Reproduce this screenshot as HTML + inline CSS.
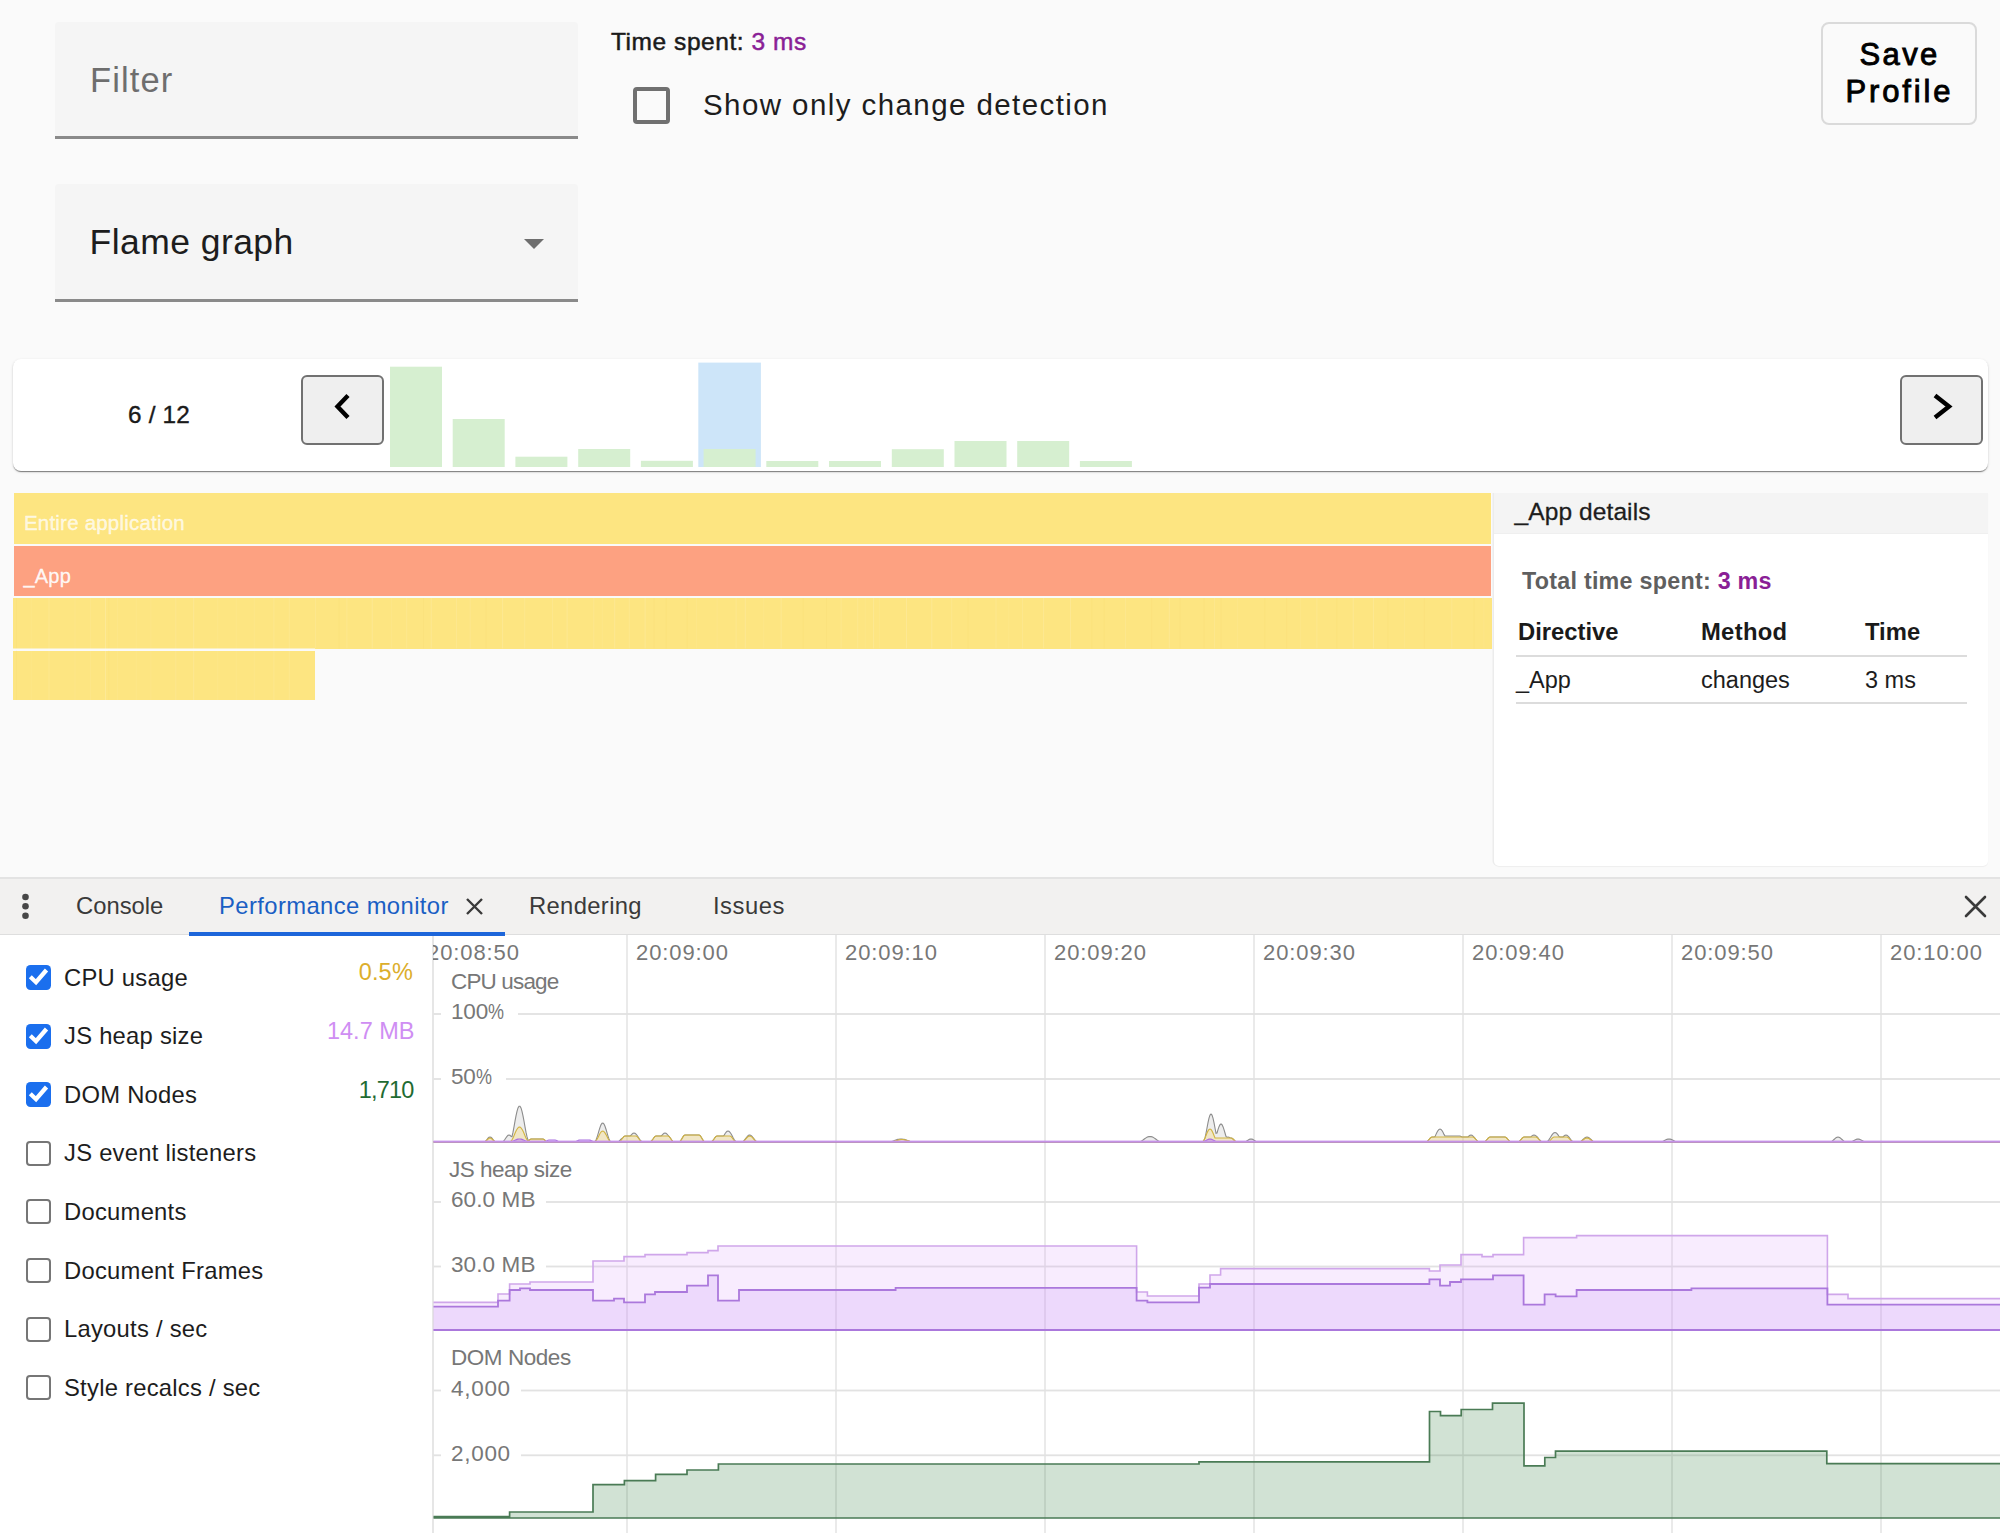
<!DOCTYPE html>
<html><head><meta charset="utf-8"><style>
html,body{margin:0;padding:0}
body{width:2000px;height:1533px;overflow:hidden;background:#fafafa;position:relative;font-family:"Liberation Sans", sans-serif}
.t{position:absolute;white-space:pre;font-family:"Liberation Sans", sans-serif}
.pc{display:inline-block;transform:scaleX(.8);transform-origin:0 0;letter-spacing:0}
</style></head><body>
<div style="position:absolute;left:55px;top:22px;width:523px;height:115px;background:#f5f5f5;border-radius:4px 4px 0 0"></div><div style="position:absolute;left:55px;top:136.4px;width:523px;height:2.3px;background:#8a8a8a"></div><div class="t" style="left:90px;top:63.27px;font-size:34.5px;line-height:34.5px;color:#6e6e6e;font-weight:400;letter-spacing:1.1px;">Filter</div>
<div style="position:absolute;left:55px;top:183.5px;width:523px;height:116px;background:#f5f5f5;border-radius:4px 4px 0 0"></div><div style="position:absolute;left:55px;top:299.4px;width:523px;height:2.3px;background:#8a8a8a"></div><div class="t" style="left:89.5px;top:224.52px;font-size:35.5px;line-height:35.5px;color:#1d1d1d;font-weight:400;letter-spacing:0.45px;">Flame graph</div>
<svg style="position:absolute;left:0;top:0" width="2000" height="400"><path d="M524 239 L544 239 L534 249 Z" fill="#6e6e6e"/></svg><div class="t" style="left:611px;top:29.97px;font-size:24.5px;line-height:24.5px;color:#1a1a1a;font-weight:400;letter-spacing:0.55px;-webkit-text-stroke:0.5px currentColor;">Time spent: <span style="color:#8a1f96">3 ms</span></div>
<div style="position:absolute;left:632.5px;top:86.5px;width:29px;height:29px;border:4px solid #707070;border-radius:4px"></div><div class="t" style="left:703px;top:90.12px;font-size:29.5px;line-height:29.5px;color:#1d1d1d;font-weight:400;letter-spacing:1.42px;">Show only change detection</div>
<div style="position:absolute;left:1821px;top:22px;width:152px;height:99px;border:2px solid #dadada;border-radius:8px;background:#fafafa"></div><div class="t" style="left:1859.5px;top:39.05px;font-size:31px;line-height:31px;color:#000;font-weight:400;letter-spacing:2.4px;-webkit-text-stroke:0.9px #000;">Save</div>
<div class="t" style="left:1845.5px;top:76.35px;font-size:31px;line-height:31px;color:#000;font-weight:400;letter-spacing:2.85px;-webkit-text-stroke:0.9px #000;">Profile</div>
<div style="position:absolute;left:13px;top:358.5px;width:1975px;height:112px;background:#fff;border-radius:8px;box-shadow:0 2px 1px -1px rgba(0,0,0,.3),0 1px 1px 0 rgba(0,0,0,.2),0 1px 3px 0 rgba(0,0,0,.14)"></div><div class="t" style="left:128px;top:403.35px;font-size:24.3px;line-height:24.3px;color:#1a1a1a;font-weight:400;letter-spacing:0.2px;-webkit-text-stroke:0.4px #1a1a1a;">6 / 12</div>
<div style="position:absolute;left:301px;top:375px;width:79px;height:66px;background:#efefef;border:2px solid #717171;border-radius:6px"></div><svg style="position:absolute;left:0;top:0" width="2000" height="500"><polyline points="348,395.5 337.5,406.5 348,417.5" fill="none" stroke="#000" stroke-width="4.4"/></svg><div style="position:absolute;left:1900px;top:375px;width:79px;height:66px;background:#efefef;border:2px solid #717171;border-radius:6px"></div><svg style="position:absolute;left:0;top:0" width="2000" height="500"><polyline points="1935,395.5 1949,406.5 1935,417.5" fill="none" stroke="#000" stroke-width="4.4"/></svg><svg style="position:absolute;left:0;top:0" width="2000" height="500"><rect x="698.3" y="362.6" width="62.6" height="104.4" fill="#cde5f9"/><rect x="390.0" y="366.7" width="52" height="100.3" fill="#d6efd0"/><rect x="452.7" y="419" width="52" height="48.0" fill="#d6efd0"/><rect x="515.4" y="456.7" width="52" height="10.3" fill="#d6efd0"/><rect x="578.2" y="449" width="52" height="18.0" fill="#d6efd0"/><rect x="640.9" y="460.8" width="52" height="6.2" fill="#d6efd0"/><rect x="703.6" y="449" width="52" height="18.0" fill="#d6efd0"/><rect x="766.3" y="461" width="52" height="6.0" fill="#d6efd0"/><rect x="829.0" y="461" width="52" height="6.0" fill="#d6efd0"/><rect x="891.8" y="449.2" width="52" height="17.8" fill="#d6efd0"/><rect x="954.5" y="441" width="52" height="26.0" fill="#d6efd0"/><rect x="1017.2" y="441" width="52" height="26.0" fill="#d6efd0"/><rect x="1079.9" y="461" width="52" height="6.0" fill="#d6efd0"/></svg><div style="position:absolute;left:14px;top:493px;width:1477px;height:50.5px;background:#fde581"></div><div style="position:absolute;left:14px;top:545.5px;width:1477px;height:50.5px;background:#fda181"></div><div style="position:absolute;left:13px;top:598px;width:1479px;height:50.5px;background:#fde581"></div><div style="position:absolute;left:13px;top:650.5px;width:302px;height:49.5px;background:#fde581"></div><svg style="position:absolute;left:0;top:0" width="1500" height="710"><rect x="16.0" y="598" width="1" height="102" fill="rgba(240,205,100,0.12)"/><rect x="30.7" y="598" width="1" height="102" fill="rgba(255,255,255,0.06)"/><rect x="48.5" y="598" width="1" height="102" fill="rgba(255,255,255,0.10)"/><rect x="74.5" y="598" width="1" height="102" fill="rgba(255,255,255,0.06)"/><rect x="90.0" y="598" width="1" height="102" fill="rgba(255,255,255,0.06)"/><rect x="108.2" y="598" width="1" height="102" fill="rgba(240,205,100,0.12)"/><rect x="116.9" y="598" width="1" height="102" fill="rgba(255,255,255,0.06)"/><rect x="135.7" y="598" width="1" height="102" fill="rgba(255,255,255,0.06)"/><rect x="150.4" y="598" width="1" height="102" fill="rgba(255,255,255,0.06)"/><rect x="175.3" y="598" width="1" height="102" fill="rgba(255,255,255,0.10)"/><rect x="193.2" y="598" width="1" height="102" fill="rgba(255,255,255,0.14)"/><rect x="217.2" y="598" width="1" height="102" fill="rgba(255,255,255,0.06)"/><rect x="235.7" y="598" width="1" height="102" fill="rgba(255,255,255,0.06)"/><rect x="253.8" y="598" width="1" height="102" fill="rgba(255,255,255,0.06)"/><rect x="273.4" y="598" width="1" height="102" fill="rgba(255,255,255,0.10)"/><rect x="288.8" y="598" width="1" height="102" fill="rgba(255,255,255,0.10)"/><rect x="315.1" y="598" width="1" height="50.5" fill="rgba(255,255,255,0.10)"/><rect x="338.6" y="598" width="1" height="50.5" fill="rgba(240,205,100,0.12)"/><rect x="346.4" y="598" width="1" height="50.5" fill="rgba(255,255,255,0.10)"/><rect x="371.7" y="598" width="1" height="50.5" fill="rgba(255,255,255,0.14)"/><rect x="391.1" y="598" width="1" height="50.5" fill="rgba(255,255,255,0.06)"/><rect x="406.2" y="598" width="1" height="50.5" fill="rgba(255,255,255,0.10)"/><rect x="423.0" y="598" width="1" height="50.5" fill="rgba(240,205,100,0.12)"/><rect x="430.7" y="598" width="1" height="50.5" fill="rgba(255,255,255,0.14)"/><rect x="456.0" y="598" width="1" height="50.5" fill="rgba(255,255,255,0.10)"/><rect x="469.7" y="598" width="1" height="50.5" fill="rgba(255,255,255,0.10)"/><rect x="485.7" y="598" width="1" height="50.5" fill="rgba(240,205,100,0.12)"/><rect x="502.1" y="598" width="1" height="50.5" fill="rgba(255,255,255,0.14)"/><rect x="524.2" y="598" width="1" height="50.5" fill="rgba(255,255,255,0.10)"/><rect x="552.1" y="598" width="1" height="50.5" fill="rgba(255,255,255,0.10)"/><rect x="566.6" y="598" width="1" height="50.5" fill="rgba(255,255,255,0.14)"/><rect x="593.3" y="598" width="1" height="50.5" fill="rgba(255,255,255,0.10)"/><rect x="601.8" y="598" width="1" height="50.5" fill="rgba(255,255,255,0.06)"/><rect x="614.2" y="598" width="1" height="50.5" fill="rgba(255,255,255,0.14)"/><rect x="628.8" y="598" width="1" height="50.5" fill="rgba(255,255,255,0.10)"/><rect x="644.6" y="598" width="1" height="50.5" fill="rgba(255,255,255,0.14)"/><rect x="653.7" y="598" width="1" height="50.5" fill="rgba(240,205,100,0.12)"/><rect x="665.8" y="598" width="1" height="50.5" fill="rgba(240,205,100,0.12)"/><rect x="686.8" y="598" width="1" height="50.5" fill="rgba(240,205,100,0.12)"/><rect x="696.1" y="598" width="1" height="50.5" fill="rgba(255,255,255,0.06)"/><rect x="716.6" y="598" width="1" height="50.5" fill="rgba(255,255,255,0.06)"/><rect x="735.6" y="598" width="1" height="50.5" fill="rgba(255,255,255,0.10)"/><rect x="744.8" y="598" width="1" height="50.5" fill="rgba(255,255,255,0.14)"/><rect x="763.2" y="598" width="1" height="50.5" fill="rgba(255,255,255,0.06)"/><rect x="780.6" y="598" width="1" height="50.5" fill="rgba(255,255,255,0.14)"/><rect x="802.8" y="598" width="1" height="50.5" fill="rgba(240,205,100,0.12)"/><rect x="826.0" y="598" width="1" height="50.5" fill="rgba(240,205,100,0.12)"/><rect x="840.6" y="598" width="1" height="50.5" fill="rgba(255,255,255,0.10)"/><rect x="857.2" y="598" width="1" height="50.5" fill="rgba(255,255,255,0.10)"/><rect x="864.7" y="598" width="1" height="50.5" fill="rgba(255,255,255,0.06)"/><rect x="873.1" y="598" width="1" height="50.5" fill="rgba(255,255,255,0.14)"/><rect x="879.1" y="598" width="1" height="50.5" fill="rgba(255,255,255,0.06)"/><rect x="906.0" y="598" width="1" height="50.5" fill="rgba(255,255,255,0.14)"/><rect x="931.3" y="598" width="1" height="50.5" fill="rgba(255,255,255,0.14)"/><rect x="951.2" y="598" width="1" height="50.5" fill="rgba(255,255,255,0.10)"/><rect x="967.6" y="598" width="1" height="50.5" fill="rgba(240,205,100,0.12)"/><rect x="995.5" y="598" width="1" height="50.5" fill="rgba(255,255,255,0.10)"/><rect x="1008.3" y="598" width="1" height="50.5" fill="rgba(255,255,255,0.06)"/><rect x="1021.9" y="598" width="1" height="50.5" fill="rgba(255,255,255,0.10)"/><rect x="1043.1" y="598" width="1" height="50.5" fill="rgba(255,255,255,0.14)"/><rect x="1070.0" y="598" width="1" height="50.5" fill="rgba(255,255,255,0.14)"/><rect x="1091.2" y="598" width="1" height="50.5" fill="rgba(240,205,100,0.12)"/><rect x="1103.8" y="598" width="1" height="50.5" fill="rgba(240,205,100,0.12)"/><rect x="1125.1" y="598" width="1" height="50.5" fill="rgba(255,255,255,0.10)"/><rect x="1151.1" y="598" width="1" height="50.5" fill="rgba(240,205,100,0.12)"/><rect x="1168.8" y="598" width="1" height="50.5" fill="rgba(255,255,255,0.14)"/><rect x="1179.7" y="598" width="1" height="50.5" fill="rgba(240,205,100,0.12)"/><rect x="1203.7" y="598" width="1" height="50.5" fill="rgba(240,205,100,0.12)"/><rect x="1214.1" y="598" width="1" height="50.5" fill="rgba(255,255,255,0.10)"/><rect x="1220.7" y="598" width="1" height="50.5" fill="rgba(240,205,100,0.12)"/><rect x="1237.1" y="598" width="1" height="50.5" fill="rgba(255,255,255,0.06)"/><rect x="1264.2" y="598" width="1" height="50.5" fill="rgba(240,205,100,0.12)"/><rect x="1286.1" y="598" width="1" height="50.5" fill="rgba(240,205,100,0.12)"/><rect x="1300.1" y="598" width="1" height="50.5" fill="rgba(255,255,255,0.06)"/><rect x="1316.4" y="598" width="1" height="50.5" fill="rgba(255,255,255,0.10)"/><rect x="1336.2" y="598" width="1" height="50.5" fill="rgba(240,205,100,0.12)"/><rect x="1352.7" y="598" width="1" height="50.5" fill="rgba(255,255,255,0.14)"/><rect x="1372.9" y="598" width="1" height="50.5" fill="rgba(255,255,255,0.14)"/><rect x="1387.4" y="598" width="1" height="50.5" fill="rgba(240,205,100,0.12)"/><rect x="1403.9" y="598" width="1" height="50.5" fill="rgba(255,255,255,0.06)"/><rect x="1423.9" y="598" width="1" height="50.5" fill="rgba(240,205,100,0.12)"/><rect x="1451.3" y="598" width="1" height="50.5" fill="rgba(255,255,255,0.10)"/><rect x="1473.6" y="598" width="1" height="50.5" fill="rgba(240,205,100,0.12)"/><rect x="1483.4" y="598" width="1" height="50.5" fill="rgba(255,255,255,0.06)"/><rect x="105" y="598" width="1" height="102" fill="rgba(255,255,255,0.16)"/><rect x="13" y="648.5" width="302" height="2" fill="#fafafa"/></svg><div class="t" style="left:24px;top:512.58px;font-size:20.5px;line-height:20.5px;color:rgba(255,255,255,.72);font-weight:400;letter-spacing:0.2px;-webkit-text-stroke:0.4px rgba(255,255,255,.72);">Entire application</div>
<div class="t" style="left:23.5px;top:565.50px;font-size:20px;line-height:20px;color:rgba(255,255,255,.92);font-weight:400;letter-spacing:0.2px;-webkit-text-stroke:0.3px rgba(255,255,255,.9);">_App</div>
<div style="position:absolute;left:1494px;top:493px;width:494px;height:373px;background:#fff;border-radius:0 0 5px 5px;box-shadow:-1.5px 0 0 #ececec, 0 1px 1px rgba(0,0,0,.05)"></div><div style="position:absolute;left:1494px;top:492.5px;width:494px;height:40px;background:#f4f4f4;border-bottom:1px solid #efefef"></div><div class="t" style="left:1514.5px;top:499.57px;font-size:24.5px;line-height:24.5px;color:#1d1d1d;font-weight:400;letter-spacing:0.1px;-webkit-text-stroke:0.3px #1d1d1d;">_App details</div>
<div class="t" style="left:1522px;top:569.80px;font-size:23.3px;line-height:23.3px;color:#5f5f5f;font-weight:700;letter-spacing:0.25px;">Total time spent: <span style="color:#8a1f96">3 ms</span></div>
<div class="t" style="left:1518px;top:620.27px;font-size:23.8px;line-height:23.8px;color:#1a1a1a;font-weight:700;letter-spacing:0px;">Directive</div>
<div class="t" style="left:1701px;top:620.27px;font-size:23.8px;line-height:23.8px;color:#1a1a1a;font-weight:700;letter-spacing:0.3px;">Method</div>
<div class="t" style="left:1865px;top:620.27px;font-size:23.8px;line-height:23.8px;color:#1a1a1a;font-weight:700;letter-spacing:0px;">Time</div>
<div style="position:absolute;left:1516px;top:654.6px;width:451px;height:2px;background:#dcdcdc"></div><div class="t" style="left:1516px;top:669.02px;font-size:23.5px;line-height:23.5px;color:#1d1d1d;font-weight:400;letter-spacing:0px;">_App</div>
<div class="t" style="left:1701px;top:669.02px;font-size:23.5px;line-height:23.5px;color:#1d1d1d;font-weight:400;letter-spacing:0px;">changes</div>
<div class="t" style="left:1865px;top:669.02px;font-size:23.5px;line-height:23.5px;color:#1d1d1d;font-weight:400;letter-spacing:0px;">3 ms</div>
<div style="position:absolute;left:1516px;top:702px;width:451px;height:2px;background:#dcdcdc"></div><div style="position:absolute;left:0;top:877px;width:2000px;height:2px;background:#e3e3e3"></div><div style="position:absolute;left:0;top:879px;width:2000px;height:55px;background:#f2f1f0"></div><div style="position:absolute;left:0;top:934px;width:2000px;height:1px;background:#dedede"></div><div style="position:absolute;left:0;top:935px;width:2000px;height:598px;background:#fff"></div><svg style="position:absolute;left:0;top:0" width="2000" height="1533"><circle cx="25.5" cy="897" r="3.3" fill="#474747"/><circle cx="25.5" cy="906.3" r="3.3" fill="#474747"/><circle cx="25.5" cy="915.8" r="3.3" fill="#474747"/><path d="M467 899 L482 914 M482 899 L467 914" stroke="#3a3a3a" stroke-width="2.4"/><path d="M1966 897 L1985 916 M1985 897 L1966 916" stroke="#3a3a3a" stroke-width="2.6" stroke-linecap="round"/></svg><div class="t" style="left:76px;top:894.07px;font-size:23.8px;line-height:23.8px;color:#3a3a3a;font-weight:400;letter-spacing:0px;">Console</div>
<div class="t" style="left:219px;top:894.07px;font-size:23.8px;line-height:23.8px;color:#1a5fc4;font-weight:400;letter-spacing:0.4px;">Performance monitor</div>
<div class="t" style="left:529px;top:894.07px;font-size:23.8px;line-height:23.8px;color:#3a3a3a;font-weight:400;letter-spacing:0.35px;">Rendering</div>
<div class="t" style="left:713px;top:894.07px;font-size:23.8px;line-height:23.8px;color:#3a3a3a;font-weight:400;letter-spacing:0.5px;">Issues</div>
<div style="position:absolute;left:189px;top:932px;width:316px;height:3.5px;background:#1d66da"></div><div style="position:absolute;left:25.5px;top:965.0px;width:25px;height:25px;background:#1b6fee;border-radius:4.5px"></div><svg style="position:absolute;left:25.5px;top:965.0px" width="25" height="25"><polyline points="4.3,11.8 10,17.2 20.5,5" fill="none" stroke="#fff" stroke-width="4.3"/></svg><div class="t" style="left:64px;top:965.52px;font-size:23.8px;line-height:23.8px;color:#1d1d1d;font-weight:400;letter-spacing:0.25px;">CPU usage</div>
<div style="position:absolute;left:25.5px;top:1023.6px;width:25px;height:25px;background:#1b6fee;border-radius:4.5px"></div><svg style="position:absolute;left:25.5px;top:1023.6px" width="25" height="25"><polyline points="4.3,11.8 10,17.2 20.5,5" fill="none" stroke="#fff" stroke-width="4.3"/></svg><div class="t" style="left:64px;top:1024.12px;font-size:23.8px;line-height:23.8px;color:#1d1d1d;font-weight:400;letter-spacing:0.25px;">JS heap size</div>
<div style="position:absolute;left:25.5px;top:1082.2px;width:25px;height:25px;background:#1b6fee;border-radius:4.5px"></div><svg style="position:absolute;left:25.5px;top:1082.2px" width="25" height="25"><polyline points="4.3,11.8 10,17.2 20.5,5" fill="none" stroke="#fff" stroke-width="4.3"/></svg><div class="t" style="left:64px;top:1082.72px;font-size:23.8px;line-height:23.8px;color:#1d1d1d;font-weight:400;letter-spacing:0.25px;">DOM Nodes</div>
<div style="position:absolute;left:25.5px;top:1140.8px;width:21px;height:21px;border:2px solid #767676;border-radius:4px"></div><div class="t" style="left:64px;top:1141.32px;font-size:23.8px;line-height:23.8px;color:#1d1d1d;font-weight:400;letter-spacing:0.25px;">JS event listeners</div>
<div style="position:absolute;left:25.5px;top:1199.4px;width:21px;height:21px;border:2px solid #767676;border-radius:4px"></div><div class="t" style="left:64px;top:1199.92px;font-size:23.8px;line-height:23.8px;color:#1d1d1d;font-weight:400;letter-spacing:0.25px;">Documents</div>
<div style="position:absolute;left:25.5px;top:1258.0px;width:21px;height:21px;border:2px solid #767676;border-radius:4px"></div><div class="t" style="left:64px;top:1258.52px;font-size:23.8px;line-height:23.8px;color:#1d1d1d;font-weight:400;letter-spacing:0.25px;">Document Frames</div>
<div style="position:absolute;left:25.5px;top:1316.6px;width:21px;height:21px;border:2px solid #767676;border-radius:4px"></div><div class="t" style="left:64px;top:1317.12px;font-size:23.8px;line-height:23.8px;color:#1d1d1d;font-weight:400;letter-spacing:0.25px;">Layouts / sec</div>
<div style="position:absolute;left:25.5px;top:1375.2px;width:21px;height:21px;border:2px solid #767676;border-radius:4px"></div><div class="t" style="left:64px;top:1375.72px;font-size:23.8px;line-height:23.8px;color:#1d1d1d;font-weight:400;letter-spacing:0.25px;">Style recalcs / sec</div>
<div class="t" style="right:1587px;text-align:right;top:961.23px;font-size:23.5px;line-height:23.5px;color:#dcae2c;font-weight:400;letter-spacing:0.2px;">0.5%</div>
<div class="t" style="right:1585.5px;text-align:right;top:1019.73px;font-size:23.5px;line-height:23.5px;color:#cf8ef3;font-weight:400;letter-spacing:0px;">14.7 MB</div>
<div class="t" style="right:1586.5px;text-align:right;top:1078.62px;font-size:23.5px;line-height:23.5px;color:#1f6b32;font-weight:400;letter-spacing:-0.8px;">1,710</div>
<div style="position:absolute;left:432px;top:936px;width:1.5px;height:597px;background:#e6e6e6"></div><svg style="position:absolute;left:0;top:0" width="2000" height="1533"><defs><clipPath id="cc"><rect x="433.5" y="935" width="1567" height="598"/></clipPath></defs><g clip-path="url(#cc)"><rect x="626.25" y="935" width="1.5" height="598" fill="#e4e4e4"/><rect x="835.25" y="935" width="1.5" height="598" fill="#e4e4e4"/><rect x="1044.25" y="935" width="1.5" height="598" fill="#e4e4e4"/><rect x="1253.25" y="935" width="1.5" height="598" fill="#e4e4e4"/><rect x="1462.25" y="935" width="1.5" height="598" fill="#e4e4e4"/><rect x="1671.25" y="935" width="1.5" height="598" fill="#e4e4e4"/><rect x="1880.25" y="935" width="1.5" height="598" fill="#e4e4e4"/><rect x="433" y="1013.1" width="1567" height="1.8" fill="#e2e2e2"/><rect x="433" y="1078.1" width="1567" height="1.8" fill="#e2e2e2"/><rect x="433" y="1201.1" width="1567" height="1.8" fill="#e2e2e2"/><rect x="433" y="1265.6" width="1567" height="1.8" fill="#e2e2e2"/><rect x="433" y="1389.6" width="1567" height="1.8" fill="#e2e2e2"/><rect x="433" y="1454.3999999999999" width="1567" height="1.8" fill="#e2e2e2"/><path d="M430 1330 L430 1302.4 L498 1302.4 L498 1294 L509.6 1294 L509.6 1284 L530 1284 L530 1282 L593 1282 L593 1261 L624 1261 L624 1256.6 L645 1256.6 L645 1254.6 L687 1254.6 L687 1252.6 L708 1252.6 L708 1250.6 L718 1250.6 L718 1246 L1136.6 1246 L1136.6 1292 L1147.4 1292 L1147.4 1296 L1199 1296 L1199 1284 L1210 1284 L1210 1275 L1220.6 1275 L1220.6 1268.6 L1429.4 1268.6 L1429.4 1271 L1440 1271 L1440 1265 L1461 1265 L1461 1254.6 L1482 1254.6 L1482 1256.6 L1493 1256.6 L1493 1254.6 L1523.6 1254.6 L1523.6 1237.6 L1576.6 1237.6 L1576.6 1235.6 L1827.4 1235.6 L1827.4 1294.4 L1848 1294.4 L1848 1298.6 L2003 1298.6 L2003 1330 Z" fill="rgba(222,160,248,0.2)" stroke="#cfa6ea" stroke-width="1.6"/><path d="M430 1330 L430 1306.6 L498 1306.6 L498 1300.6 L509.6 1300.6 L509.6 1290 L520 1290 L520 1288.4 L530 1288.4 L530 1290 L593 1290 L593 1300.6 L614 1300.6 L614 1298.6 L624 1298.6 L624 1302.4 L645 1302.4 L645 1294.4 L655 1294.4 L655 1292 L687 1292 L687 1285.6 L708 1285.6 L708 1275.4 L718 1275.4 L718 1300.6 L739 1300.6 L739 1290 L895.6 1290 L895.6 1287.8 L1136.6 1287.8 L1136.6 1300.6 L1147.4 1300.6 L1147.4 1302.4 L1199 1302.4 L1199 1287.6 L1210 1287.6 L1210 1284 L1429.4 1284 L1429.4 1279.4 L1440 1279.4 L1440 1285.6 L1450 1285.6 L1450 1282 L1461 1282 L1461 1279.4 L1493 1279.4 L1493 1275.4 L1523.6 1275.4 L1523.6 1304.6 L1544.6 1304.6 L1544.6 1294.4 L1555.6 1294.4 L1555.6 1296.4 L1576.6 1296.4 L1576.6 1290 L1691.4 1290 L1691.4 1288.4 L1827.4 1288.4 L1827.4 1304.6 L2003 1304.6 L2003 1330 Z" fill="rgba(183,119,240,0.16)" stroke="#ab78dc" stroke-width="1.8"/><path d="M430 1518 L430 1516.6 L509.6 1516.6 L509.6 1512 L593 1512 L593 1484.6 L624.4 1484.6 L624.4 1480.6 L655.6 1480.6 L655.6 1474.4 L687 1474.4 L687 1470 L718.4 1470 L718.4 1464 L1199 1464 L1199 1461.8 L1429.5 1461.8 L1429.5 1411.5 L1440.5 1411.5 L1440.5 1415.7 L1461.2 1415.7 L1461.2 1409.5 L1492.5 1409.5 L1492.5 1403.2 L1524 1403.2 L1524 1465.8 L1544.8 1465.8 L1544.8 1457.5 L1555.5 1457.5 L1555.5 1451.2 L1826.8 1451.2 L1826.8 1463.7 L2003 1463.7 L2003 1518 Z" fill="rgba(44,124,57,0.22)" stroke="#4a7b55" stroke-width="1.7"/><path d="M432 1142 L433.0 1142.00 L434.0 1142.00 L435.0 1142.00 L436.0 1142.00 L437.0 1142.00 L438.0 1142.00 L439.0 1142.00 L440.0 1142.00 L441.0 1142.00 L442.0 1142.00 L443.0 1142.00 L444.0 1142.00 L445.0 1142.00 L446.0 1142.00 L447.0 1142.00 L448.0 1142.00 L449.0 1142.00 L450.0 1142.00 L451.0 1142.00 L452.0 1142.00 L453.0 1142.00 L454.0 1142.00 L455.0 1142.00 L456.0 1142.00 L457.0 1142.00 L458.0 1142.00 L459.0 1142.00 L460.0 1142.00 L461.0 1142.00 L462.0 1142.00 L463.0 1142.00 L464.0 1142.00 L465.0 1142.00 L466.0 1142.00 L467.0 1142.00 L468.0 1142.00 L469.0 1142.00 L470.0 1142.00 L471.0 1142.00 L472.0 1142.00 L473.0 1142.00 L474.0 1142.00 L475.0 1142.00 L476.0 1142.00 L477.0 1142.00 L478.0 1142.00 L479.0 1142.00 L480.0 1142.00 L481.0 1142.00 L482.0 1142.00 L483.0 1142.00 L484.0 1142.00 L485.0 1141.67 L486.0 1140.75 L487.0 1139.50 L488.0 1138.25 L489.0 1137.33 L490.0 1137.00 L491.0 1137.33 L492.0 1138.25 L493.0 1139.50 L494.0 1140.75 L495.0 1141.67 L496.0 1142.00 L497.0 1142.00 L498.0 1142.00 L499.0 1142.00 L500.0 1142.00 L501.0 1142.00 L502.0 1142.00 L503.0 1141.65 L504.0 1140.68 L505.0 1139.28 L506.0 1137.72 L507.0 1136.32 L508.0 1135.35 L509.0 1135.00 L510.0 1135.35 L511.0 1136.32 L512.0 1136.73 L513.0 1132.17 L514.0 1126.82 L515.0 1121.18 L516.0 1115.83 L517.0 1111.27 L518.0 1107.96 L519.0 1106.22 L520.0 1106.22 L521.0 1107.96 L522.0 1111.27 L523.0 1115.83 L524.0 1121.18 L525.0 1126.82 L526.0 1132.17 L527.0 1136.73 L528.0 1140.04 L529.0 1140.50 L530.0 1139.47 L531.0 1139.00 L532.0 1139.00 L533.0 1139.00 L534.0 1139.00 L535.0 1139.00 L536.0 1139.00 L537.0 1139.00 L538.0 1139.00 L539.0 1139.00 L540.0 1139.00 L541.0 1139.00 L542.0 1139.00 L543.0 1139.00 L544.0 1139.47 L545.0 1140.50 L546.0 1141.53 L547.0 1142.00 L548.0 1142.00 L549.0 1142.00 L550.0 1142.00 L551.0 1142.00 L552.0 1142.00 L553.0 1142.00 L554.0 1142.00 L555.0 1142.00 L556.0 1142.00 L557.0 1142.00 L558.0 1142.00 L559.0 1142.00 L560.0 1142.00 L561.0 1142.00 L562.0 1142.00 L563.0 1142.00 L564.0 1142.00 L565.0 1142.00 L566.0 1142.00 L567.0 1142.00 L568.0 1142.00 L569.0 1142.00 L570.0 1142.00 L571.0 1142.00 L572.0 1142.00 L573.0 1142.00 L574.0 1142.00 L575.0 1142.00 L576.0 1142.00 L577.0 1142.00 L578.0 1142.00 L579.0 1142.00 L580.0 1142.00 L581.0 1142.00 L582.0 1142.00 L583.0 1142.00 L584.0 1142.00 L585.0 1142.00 L586.0 1142.00 L587.0 1142.00 L588.0 1142.00 L589.0 1142.00 L590.0 1142.00 L591.0 1142.00 L592.0 1142.00 L593.0 1142.00 L594.0 1142.00 L595.0 1141.59 L596.0 1139.97 L597.0 1137.35 L598.0 1134.07 L599.0 1130.58 L600.0 1127.35 L601.0 1124.81 L602.0 1123.32 L603.0 1123.06 L604.0 1124.08 L605.0 1126.23 L606.0 1129.23 L607.0 1132.68 L608.0 1136.09 L609.0 1139.03 L610.0 1141.08 L611.0 1141.97 L612.0 1142.00 L613.0 1142.00 L614.0 1142.00 L615.0 1142.00 L616.0 1142.00 L617.0 1142.00 L618.0 1141.78 L619.0 1141.15 L620.0 1140.25 L621.0 1139.25 L622.0 1138.35 L623.0 1137.56 L624.0 1136.44 L625.0 1136.00 L626.0 1136.00 L627.0 1136.00 L628.0 1136.00 L629.0 1136.00 L630.0 1136.00 L631.0 1135.25 L632.0 1134.05 L633.0 1133.27 L634.0 1133.00 L635.0 1133.27 L636.0 1134.05 L637.0 1135.25 L638.0 1136.72 L639.0 1138.28 L640.0 1139.75 L641.0 1140.95 L642.0 1141.73 L643.0 1142.00 L644.0 1142.00 L645.0 1142.00 L646.0 1142.00 L647.0 1142.00 L648.0 1142.00 L649.0 1142.00 L650.0 1141.78 L651.0 1141.15 L652.0 1140.25 L653.0 1139.00 L654.0 1137.56 L655.0 1136.44 L656.0 1136.00 L657.0 1136.00 L658.0 1136.00 L659.0 1136.00 L660.0 1136.00 L661.0 1136.00 L662.0 1135.25 L663.0 1134.05 L664.0 1133.27 L665.0 1133.00 L666.0 1133.27 L667.0 1134.05 L668.0 1135.25 L669.0 1136.44 L670.0 1137.56 L671.0 1139.00 L672.0 1140.44 L673.0 1141.56 L674.0 1142.00 L675.0 1142.00 L676.0 1142.00 L677.0 1142.00 L678.0 1142.00 L679.0 1142.00 L680.0 1141.48 L681.0 1140.19 L682.0 1138.50 L683.0 1136.81 L684.0 1135.52 L685.0 1135.00 L686.0 1135.00 L687.0 1135.00 L688.0 1135.00 L689.0 1135.00 L690.0 1135.00 L691.0 1135.00 L692.0 1135.00 L693.0 1135.00 L694.0 1135.00 L695.0 1135.00 L696.0 1135.00 L697.0 1135.00 L698.0 1135.00 L699.0 1135.00 L700.0 1135.52 L701.0 1136.81 L702.0 1138.50 L703.0 1140.19 L704.0 1141.48 L705.0 1142.00 L706.0 1142.00 L707.0 1142.00 L708.0 1142.00 L709.0 1142.00 L710.0 1142.00 L711.0 1141.79 L712.0 1141.19 L713.0 1140.30 L714.0 1139.00 L715.0 1137.56 L716.0 1136.44 L717.0 1136.00 L718.0 1136.00 L719.0 1136.00 L720.0 1136.00 L721.0 1136.00 L722.0 1136.00 L723.0 1136.00 L724.0 1135.54 L725.0 1133.75 L726.0 1132.29 L727.0 1131.33 L728.0 1131.00 L729.0 1131.33 L730.0 1132.29 L731.0 1133.75 L732.0 1135.54 L733.0 1137.46 L734.0 1139.25 L735.0 1140.71 L736.0 1141.67 L737.0 1142.00 L738.0 1142.00 L739.0 1142.00 L740.0 1142.00 L741.0 1142.00 L742.0 1141.98 L743.0 1141.55 L744.0 1140.67 L745.0 1139.45 L746.0 1138.09 L747.0 1136.79 L748.0 1135.75 L749.0 1135.13 L750.0 1135.02 L751.0 1135.45 L752.0 1136.33 L753.0 1137.55 L754.0 1138.91 L755.0 1140.21 L756.0 1141.25 L757.0 1141.87 L758.0 1142.00 L759.0 1142.00 L760.0 1142.00 L761.0 1142.00 L762.0 1142.00 L763.0 1142.00 L764.0 1142.00 L765.0 1142.00 L766.0 1142.00 L767.0 1142.00 L768.0 1142.00 L769.0 1142.00 L770.0 1142.00 L771.0 1142.00 L772.0 1142.00 L773.0 1142.00 L774.0 1142.00 L775.0 1142.00 L776.0 1142.00 L777.0 1142.00 L778.0 1142.00 L779.0 1142.00 L780.0 1142.00 L781.0 1142.00 L782.0 1142.00 L783.0 1142.00 L784.0 1142.00 L785.0 1142.00 L786.0 1142.00 L787.0 1142.00 L788.0 1142.00 L789.0 1142.00 L790.0 1142.00 L791.0 1142.00 L792.0 1142.00 L793.0 1142.00 L794.0 1142.00 L795.0 1142.00 L796.0 1142.00 L797.0 1142.00 L798.0 1142.00 L799.0 1142.00 L800.0 1142.00 L801.0 1142.00 L802.0 1142.00 L803.0 1142.00 L804.0 1142.00 L805.0 1142.00 L806.0 1142.00 L807.0 1142.00 L808.0 1142.00 L809.0 1142.00 L810.0 1142.00 L811.0 1142.00 L812.0 1142.00 L813.0 1142.00 L814.0 1142.00 L815.0 1142.00 L816.0 1142.00 L817.0 1142.00 L818.0 1142.00 L819.0 1142.00 L820.0 1142.00 L821.0 1142.00 L822.0 1142.00 L823.0 1142.00 L824.0 1142.00 L825.0 1142.00 L826.0 1142.00 L827.0 1142.00 L828.0 1142.00 L829.0 1142.00 L830.0 1142.00 L831.0 1142.00 L832.0 1142.00 L833.0 1142.00 L834.0 1142.00 L835.0 1142.00 L836.0 1142.00 L837.0 1142.00 L838.0 1142.00 L839.0 1142.00 L840.0 1142.00 L841.0 1142.00 L842.0 1142.00 L843.0 1142.00 L844.0 1142.00 L845.0 1142.00 L846.0 1142.00 L847.0 1142.00 L848.0 1142.00 L849.0 1142.00 L850.0 1142.00 L851.0 1142.00 L852.0 1142.00 L853.0 1142.00 L854.0 1142.00 L855.0 1142.00 L856.0 1142.00 L857.0 1142.00 L858.0 1142.00 L859.0 1142.00 L860.0 1142.00 L861.0 1142.00 L862.0 1142.00 L863.0 1142.00 L864.0 1142.00 L865.0 1142.00 L866.0 1142.00 L867.0 1142.00 L868.0 1142.00 L869.0 1142.00 L870.0 1142.00 L871.0 1142.00 L872.0 1142.00 L873.0 1142.00 L874.0 1142.00 L875.0 1142.00 L876.0 1142.00 L877.0 1142.00 L878.0 1142.00 L879.0 1142.00 L880.0 1142.00 L881.0 1142.00 L882.0 1142.00 L883.0 1142.00 L884.0 1142.00 L885.0 1142.00 L886.0 1142.00 L887.0 1142.00 L888.0 1142.00 L889.0 1141.96 L890.0 1141.83 L891.0 1141.62 L892.0 1141.35 L893.0 1141.03 L894.0 1140.68 L895.0 1140.32 L896.0 1139.97 L897.0 1139.65 L898.0 1139.38 L899.0 1139.17 L900.0 1139.04 L901.0 1139.00 L902.0 1139.04 L903.0 1139.17 L904.0 1139.38 L905.0 1139.65 L906.0 1139.97 L907.0 1140.32 L908.0 1140.68 L909.0 1141.03 L910.0 1141.35 L911.0 1141.62 L912.0 1141.83 L913.0 1141.96 L914.0 1142.00 L915.0 1142.00 L916.0 1142.00 L917.0 1142.00 L918.0 1142.00 L919.0 1142.00 L920.0 1142.00 L921.0 1142.00 L922.0 1142.00 L923.0 1142.00 L924.0 1142.00 L925.0 1142.00 L926.0 1142.00 L927.0 1142.00 L928.0 1142.00 L929.0 1142.00 L930.0 1142.00 L931.0 1142.00 L932.0 1142.00 L933.0 1142.00 L934.0 1142.00 L935.0 1142.00 L936.0 1142.00 L937.0 1142.00 L938.0 1142.00 L939.0 1142.00 L940.0 1142.00 L941.0 1142.00 L942.0 1142.00 L943.0 1142.00 L944.0 1142.00 L945.0 1142.00 L946.0 1142.00 L947.0 1142.00 L948.0 1142.00 L949.0 1142.00 L950.0 1142.00 L951.0 1142.00 L952.0 1142.00 L953.0 1142.00 L954.0 1142.00 L955.0 1142.00 L956.0 1142.00 L957.0 1142.00 L958.0 1142.00 L959.0 1142.00 L960.0 1142.00 L961.0 1142.00 L962.0 1142.00 L963.0 1142.00 L964.0 1142.00 L965.0 1142.00 L966.0 1142.00 L967.0 1142.00 L968.0 1142.00 L969.0 1142.00 L970.0 1142.00 L971.0 1142.00 L972.0 1142.00 L973.0 1142.00 L974.0 1142.00 L975.0 1142.00 L976.0 1142.00 L977.0 1142.00 L978.0 1142.00 L979.0 1142.00 L980.0 1142.00 L981.0 1142.00 L982.0 1142.00 L983.0 1142.00 L984.0 1142.00 L985.0 1142.00 L986.0 1142.00 L987.0 1142.00 L988.0 1142.00 L989.0 1142.00 L990.0 1142.00 L991.0 1142.00 L992.0 1142.00 L993.0 1142.00 L994.0 1142.00 L995.0 1142.00 L996.0 1142.00 L997.0 1142.00 L998.0 1142.00 L999.0 1142.00 L1000.0 1142.00 L1001.0 1142.00 L1002.0 1142.00 L1003.0 1142.00 L1004.0 1142.00 L1005.0 1142.00 L1006.0 1142.00 L1007.0 1142.00 L1008.0 1142.00 L1009.0 1142.00 L1010.0 1142.00 L1011.0 1142.00 L1012.0 1142.00 L1013.0 1142.00 L1014.0 1142.00 L1015.0 1142.00 L1016.0 1142.00 L1017.0 1142.00 L1018.0 1142.00 L1019.0 1142.00 L1020.0 1142.00 L1021.0 1142.00 L1022.0 1142.00 L1023.0 1142.00 L1024.0 1142.00 L1025.0 1142.00 L1026.0 1142.00 L1027.0 1142.00 L1028.0 1142.00 L1029.0 1142.00 L1030.0 1142.00 L1031.0 1142.00 L1032.0 1142.00 L1033.0 1142.00 L1034.0 1142.00 L1035.0 1142.00 L1036.0 1142.00 L1037.0 1142.00 L1038.0 1142.00 L1039.0 1142.00 L1040.0 1142.00 L1041.0 1142.00 L1042.0 1142.00 L1043.0 1142.00 L1044.0 1142.00 L1045.0 1142.00 L1046.0 1142.00 L1047.0 1142.00 L1048.0 1142.00 L1049.0 1142.00 L1050.0 1142.00 L1051.0 1142.00 L1052.0 1142.00 L1053.0 1142.00 L1054.0 1142.00 L1055.0 1142.00 L1056.0 1142.00 L1057.0 1142.00 L1058.0 1142.00 L1059.0 1142.00 L1060.0 1142.00 L1061.0 1142.00 L1062.0 1142.00 L1063.0 1142.00 L1064.0 1142.00 L1065.0 1142.00 L1066.0 1142.00 L1067.0 1142.00 L1068.0 1142.00 L1069.0 1142.00 L1070.0 1142.00 L1071.0 1142.00 L1072.0 1142.00 L1073.0 1142.00 L1074.0 1142.00 L1075.0 1142.00 L1076.0 1142.00 L1077.0 1142.00 L1078.0 1142.00 L1079.0 1142.00 L1080.0 1142.00 L1081.0 1142.00 L1082.0 1142.00 L1083.0 1142.00 L1084.0 1142.00 L1085.0 1142.00 L1086.0 1142.00 L1087.0 1142.00 L1088.0 1142.00 L1089.0 1142.00 L1090.0 1142.00 L1091.0 1142.00 L1092.0 1142.00 L1093.0 1142.00 L1094.0 1142.00 L1095.0 1142.00 L1096.0 1142.00 L1097.0 1142.00 L1098.0 1142.00 L1099.0 1142.00 L1100.0 1142.00 L1101.0 1142.00 L1102.0 1142.00 L1103.0 1142.00 L1104.0 1142.00 L1105.0 1142.00 L1106.0 1142.00 L1107.0 1142.00 L1108.0 1142.00 L1109.0 1142.00 L1110.0 1142.00 L1111.0 1142.00 L1112.0 1142.00 L1113.0 1142.00 L1114.0 1142.00 L1115.0 1142.00 L1116.0 1142.00 L1117.0 1142.00 L1118.0 1142.00 L1119.0 1142.00 L1120.0 1142.00 L1121.0 1142.00 L1122.0 1142.00 L1123.0 1142.00 L1124.0 1142.00 L1125.0 1142.00 L1126.0 1142.00 L1127.0 1142.00 L1128.0 1142.00 L1129.0 1142.00 L1130.0 1142.00 L1131.0 1142.00 L1132.0 1142.00 L1133.0 1142.00 L1134.0 1142.00 L1135.0 1142.00 L1136.0 1142.00 L1137.0 1142.00 L1138.0 1142.00 L1139.0 1141.91 L1140.0 1141.63 L1141.0 1141.19 L1142.0 1140.62 L1143.0 1139.96 L1144.0 1139.25 L1145.0 1138.54 L1146.0 1137.88 L1147.0 1137.31 L1148.0 1136.87 L1149.0 1136.59 L1150.0 1136.50 L1151.0 1136.59 L1152.0 1136.87 L1153.0 1137.31 L1154.0 1137.88 L1155.0 1138.54 L1156.0 1139.25 L1157.0 1139.96 L1158.0 1140.62 L1159.0 1141.19 L1160.0 1141.63 L1161.0 1141.91 L1162.0 1142.00 L1163.0 1142.00 L1164.0 1142.00 L1165.0 1142.00 L1166.0 1142.00 L1167.0 1142.00 L1168.0 1142.00 L1169.0 1142.00 L1170.0 1142.00 L1171.0 1142.00 L1172.0 1142.00 L1173.0 1142.00 L1174.0 1142.00 L1175.0 1142.00 L1176.0 1142.00 L1177.0 1142.00 L1178.0 1142.00 L1179.0 1142.00 L1180.0 1142.00 L1181.0 1142.00 L1182.0 1142.00 L1183.0 1142.00 L1184.0 1142.00 L1185.0 1142.00 L1186.0 1142.00 L1187.0 1142.00 L1188.0 1142.00 L1189.0 1142.00 L1190.0 1142.00 L1191.0 1142.00 L1192.0 1142.00 L1193.0 1142.00 L1194.0 1142.00 L1195.0 1142.00 L1196.0 1142.00 L1197.0 1142.00 L1198.0 1142.00 L1199.0 1142.00 L1200.0 1142.00 L1201.0 1142.00 L1202.0 1142.00 L1203.0 1141.51 L1204.0 1140.10 L1205.0 1137.90 L1206.0 1133.36 L1207.0 1128.00 L1208.0 1122.64 L1209.0 1118.10 L1210.0 1115.07 L1211.0 1114.00 L1212.0 1115.07 L1213.0 1118.10 L1214.0 1122.64 L1215.0 1128.00 L1216.0 1133.36 L1217.0 1133.00 L1218.0 1129.56 L1219.0 1126.64 L1220.0 1124.69 L1221.0 1124.00 L1222.0 1124.69 L1223.0 1126.64 L1224.0 1129.56 L1225.0 1133.00 L1226.0 1136.44 L1227.0 1137.19 L1228.0 1137.00 L1229.0 1137.19 L1230.0 1137.73 L1231.0 1138.00 L1232.0 1138.30 L1233.0 1139.04 L1234.0 1140.00 L1235.0 1140.96 L1236.0 1141.70 L1237.0 1142.00 L1238.0 1142.00 L1239.0 1142.00 L1240.0 1142.00 L1241.0 1142.00 L1242.0 1142.00 L1243.0 1142.00 L1244.0 1142.00 L1245.0 1141.85 L1246.0 1141.44 L1247.0 1140.83 L1248.0 1140.17 L1249.0 1139.56 L1250.0 1139.15 L1251.0 1139.00 L1252.0 1139.15 L1253.0 1139.56 L1254.0 1140.17 L1255.0 1140.83 L1256.0 1141.44 L1257.0 1141.85 L1258.0 1142.00 L1259.0 1142.00 L1260.0 1142.00 L1261.0 1142.00 L1262.0 1142.00 L1263.0 1142.00 L1264.0 1142.00 L1265.0 1142.00 L1266.0 1142.00 L1267.0 1142.00 L1268.0 1142.00 L1269.0 1142.00 L1270.0 1142.00 L1271.0 1142.00 L1272.0 1142.00 L1273.0 1142.00 L1274.0 1142.00 L1275.0 1142.00 L1276.0 1142.00 L1277.0 1142.00 L1278.0 1142.00 L1279.0 1142.00 L1280.0 1142.00 L1281.0 1142.00 L1282.0 1142.00 L1283.0 1142.00 L1284.0 1142.00 L1285.0 1142.00 L1286.0 1142.00 L1287.0 1142.00 L1288.0 1142.00 L1289.0 1142.00 L1290.0 1142.00 L1291.0 1142.00 L1292.0 1142.00 L1293.0 1142.00 L1294.0 1142.00 L1295.0 1142.00 L1296.0 1142.00 L1297.0 1142.00 L1298.0 1142.00 L1299.0 1142.00 L1300.0 1142.00 L1301.0 1142.00 L1302.0 1142.00 L1303.0 1142.00 L1304.0 1142.00 L1305.0 1142.00 L1306.0 1142.00 L1307.0 1142.00 L1308.0 1142.00 L1309.0 1142.00 L1310.0 1142.00 L1311.0 1142.00 L1312.0 1142.00 L1313.0 1142.00 L1314.0 1142.00 L1315.0 1142.00 L1316.0 1142.00 L1317.0 1142.00 L1318.0 1142.00 L1319.0 1142.00 L1320.0 1142.00 L1321.0 1142.00 L1322.0 1142.00 L1323.0 1142.00 L1324.0 1142.00 L1325.0 1142.00 L1326.0 1142.00 L1327.0 1142.00 L1328.0 1142.00 L1329.0 1142.00 L1330.0 1142.00 L1331.0 1142.00 L1332.0 1142.00 L1333.0 1142.00 L1334.0 1142.00 L1335.0 1142.00 L1336.0 1142.00 L1337.0 1142.00 L1338.0 1142.00 L1339.0 1142.00 L1340.0 1142.00 L1341.0 1142.00 L1342.0 1142.00 L1343.0 1142.00 L1344.0 1142.00 L1345.0 1142.00 L1346.0 1142.00 L1347.0 1142.00 L1348.0 1142.00 L1349.0 1142.00 L1350.0 1142.00 L1351.0 1142.00 L1352.0 1142.00 L1353.0 1142.00 L1354.0 1142.00 L1355.0 1142.00 L1356.0 1142.00 L1357.0 1142.00 L1358.0 1142.00 L1359.0 1142.00 L1360.0 1142.00 L1361.0 1142.00 L1362.0 1142.00 L1363.0 1142.00 L1364.0 1142.00 L1365.0 1142.00 L1366.0 1142.00 L1367.0 1142.00 L1368.0 1142.00 L1369.0 1142.00 L1370.0 1142.00 L1371.0 1142.00 L1372.0 1142.00 L1373.0 1142.00 L1374.0 1142.00 L1375.0 1142.00 L1376.0 1142.00 L1377.0 1142.00 L1378.0 1142.00 L1379.0 1142.00 L1380.0 1142.00 L1381.0 1142.00 L1382.0 1142.00 L1383.0 1142.00 L1384.0 1142.00 L1385.0 1142.00 L1386.0 1142.00 L1387.0 1142.00 L1388.0 1142.00 L1389.0 1142.00 L1390.0 1142.00 L1391.0 1142.00 L1392.0 1142.00 L1393.0 1142.00 L1394.0 1142.00 L1395.0 1142.00 L1396.0 1142.00 L1397.0 1142.00 L1398.0 1142.00 L1399.0 1142.00 L1400.0 1142.00 L1401.0 1142.00 L1402.0 1142.00 L1403.0 1142.00 L1404.0 1142.00 L1405.0 1142.00 L1406.0 1142.00 L1407.0 1142.00 L1408.0 1142.00 L1409.0 1142.00 L1410.0 1142.00 L1411.0 1142.00 L1412.0 1142.00 L1413.0 1142.00 L1414.0 1142.00 L1415.0 1142.00 L1416.0 1142.00 L1417.0 1142.00 L1418.0 1142.00 L1419.0 1142.00 L1420.0 1142.00 L1421.0 1142.00 L1422.0 1142.00 L1423.0 1142.00 L1424.0 1142.00 L1425.0 1142.00 L1426.0 1142.00 L1427.0 1141.63 L1428.0 1140.70 L1429.0 1139.50 L1430.0 1138.30 L1431.0 1137.37 L1432.0 1137.00 L1433.0 1137.00 L1434.0 1137.00 L1435.0 1136.63 L1436.0 1134.37 L1437.0 1132.25 L1438.0 1130.52 L1439.0 1129.39 L1440.0 1129.00 L1441.0 1129.39 L1442.0 1130.52 L1443.0 1132.25 L1444.0 1134.37 L1445.0 1136.00 L1446.0 1136.00 L1447.0 1136.00 L1448.0 1136.00 L1449.0 1136.00 L1450.0 1136.00 L1451.0 1136.00 L1452.0 1136.00 L1453.0 1136.00 L1454.0 1136.00 L1455.0 1136.00 L1456.0 1136.00 L1457.0 1136.00 L1458.0 1136.00 L1459.0 1136.00 L1460.0 1136.00 L1461.0 1136.44 L1462.0 1137.00 L1463.0 1137.00 L1464.0 1137.00 L1465.0 1137.00 L1466.0 1137.00 L1467.0 1137.00 L1468.0 1137.00 L1469.0 1136.03 L1470.0 1135.27 L1471.0 1135.00 L1472.0 1135.27 L1473.0 1136.03 L1474.0 1137.16 L1475.0 1138.30 L1476.0 1139.50 L1477.0 1140.70 L1478.0 1141.63 L1479.0 1142.00 L1480.0 1142.00 L1481.0 1142.00 L1482.0 1142.00 L1483.0 1142.00 L1484.0 1142.00 L1485.0 1141.63 L1486.0 1140.70 L1487.0 1139.50 L1488.0 1138.30 L1489.0 1137.37 L1490.0 1137.00 L1491.0 1137.00 L1492.0 1137.00 L1493.0 1137.00 L1494.0 1137.00 L1495.0 1137.00 L1496.0 1137.00 L1497.0 1137.00 L1498.0 1137.00 L1499.0 1137.00 L1500.0 1137.00 L1501.0 1137.00 L1502.0 1137.00 L1503.0 1137.00 L1504.0 1137.00 L1505.0 1137.00 L1506.0 1137.37 L1507.0 1138.30 L1508.0 1139.50 L1509.0 1140.70 L1510.0 1141.63 L1511.0 1142.00 L1512.0 1142.00 L1513.0 1142.00 L1514.0 1142.00 L1515.0 1142.00 L1516.0 1142.00 L1517.0 1142.00 L1518.0 1142.00 L1519.0 1141.63 L1520.0 1140.70 L1521.0 1139.50 L1522.0 1138.30 L1523.0 1137.37 L1524.0 1137.00 L1525.0 1137.00 L1526.0 1137.00 L1527.0 1137.00 L1528.0 1137.00 L1529.0 1137.00 L1530.0 1137.00 L1531.0 1136.75 L1532.0 1135.82 L1533.0 1135.21 L1534.0 1135.00 L1535.0 1135.21 L1536.0 1135.82 L1537.0 1136.75 L1538.0 1137.89 L1539.0 1139.11 L1540.0 1140.25 L1541.0 1141.18 L1542.0 1141.79 L1543.0 1142.00 L1544.0 1142.00 L1545.0 1142.00 L1546.0 1142.00 L1547.0 1141.71 L1548.0 1140.89 L1549.0 1139.62 L1550.0 1138.07 L1551.0 1136.43 L1552.0 1134.88 L1553.0 1133.61 L1554.0 1132.79 L1555.0 1132.50 L1556.0 1132.79 L1557.0 1133.61 L1558.0 1134.88 L1559.0 1136.43 L1560.0 1137.00 L1561.0 1137.00 L1562.0 1137.00 L1563.0 1137.00 L1564.0 1136.03 L1565.0 1135.27 L1566.0 1135.00 L1567.0 1135.27 L1568.0 1136.03 L1569.0 1137.16 L1570.0 1138.50 L1571.0 1139.84 L1572.0 1140.97 L1573.0 1141.73 L1574.0 1142.00 L1575.0 1142.00 L1576.0 1142.00 L1577.0 1142.00 L1578.0 1142.00 L1579.0 1142.00 L1580.0 1141.81 L1581.0 1141.27 L1582.0 1140.46 L1583.0 1139.50 L1584.0 1138.54 L1585.0 1137.73 L1586.0 1137.19 L1587.0 1137.00 L1588.0 1137.19 L1589.0 1137.73 L1590.0 1138.54 L1591.0 1139.50 L1592.0 1140.46 L1593.0 1141.27 L1594.0 1141.81 L1595.0 1142.00 L1596.0 1142.00 L1597.0 1142.00 L1598.0 1142.00 L1599.0 1142.00 L1600.0 1142.00 L1601.0 1142.00 L1602.0 1142.00 L1603.0 1142.00 L1604.0 1142.00 L1605.0 1142.00 L1606.0 1142.00 L1607.0 1142.00 L1608.0 1142.00 L1609.0 1142.00 L1610.0 1142.00 L1611.0 1142.00 L1612.0 1142.00 L1613.0 1142.00 L1614.0 1142.00 L1615.0 1142.00 L1616.0 1142.00 L1617.0 1142.00 L1618.0 1142.00 L1619.0 1142.00 L1620.0 1142.00 L1621.0 1142.00 L1622.0 1142.00 L1623.0 1142.00 L1624.0 1142.00 L1625.0 1142.00 L1626.0 1142.00 L1627.0 1142.00 L1628.0 1142.00 L1629.0 1142.00 L1630.0 1142.00 L1631.0 1142.00 L1632.0 1142.00 L1633.0 1142.00 L1634.0 1142.00 L1635.0 1142.00 L1636.0 1142.00 L1637.0 1142.00 L1638.0 1142.00 L1639.0 1142.00 L1640.0 1142.00 L1641.0 1142.00 L1642.0 1142.00 L1643.0 1142.00 L1644.0 1142.00 L1645.0 1142.00 L1646.0 1142.00 L1647.0 1142.00 L1648.0 1142.00 L1649.0 1142.00 L1650.0 1142.00 L1651.0 1142.00 L1652.0 1142.00 L1653.0 1142.00 L1654.0 1142.00 L1655.0 1142.00 L1656.0 1142.00 L1657.0 1142.00 L1658.0 1142.00 L1659.0 1142.00 L1660.0 1142.00 L1661.0 1141.91 L1662.0 1141.65 L1663.0 1141.25 L1664.0 1140.76 L1665.0 1140.24 L1666.0 1139.75 L1667.0 1139.35 L1668.0 1139.09 L1669.0 1139.00 L1670.0 1139.09 L1671.0 1139.35 L1672.0 1139.75 L1673.0 1140.24 L1674.0 1140.76 L1675.0 1141.25 L1676.0 1141.65 L1677.0 1141.91 L1678.0 1142.00 L1679.0 1142.00 L1680.0 1142.00 L1681.0 1142.00 L1682.0 1142.00 L1683.0 1142.00 L1684.0 1142.00 L1685.0 1142.00 L1686.0 1142.00 L1687.0 1142.00 L1688.0 1142.00 L1689.0 1142.00 L1690.0 1142.00 L1691.0 1142.00 L1692.0 1142.00 L1693.0 1142.00 L1694.0 1142.00 L1695.0 1142.00 L1696.0 1142.00 L1697.0 1142.00 L1698.0 1142.00 L1699.0 1142.00 L1700.0 1142.00 L1701.0 1142.00 L1702.0 1142.00 L1703.0 1142.00 L1704.0 1142.00 L1705.0 1142.00 L1706.0 1142.00 L1707.0 1142.00 L1708.0 1142.00 L1709.0 1142.00 L1710.0 1142.00 L1711.0 1142.00 L1712.0 1142.00 L1713.0 1142.00 L1714.0 1142.00 L1715.0 1142.00 L1716.0 1142.00 L1717.0 1142.00 L1718.0 1142.00 L1719.0 1142.00 L1720.0 1142.00 L1721.0 1142.00 L1722.0 1142.00 L1723.0 1142.00 L1724.0 1142.00 L1725.0 1142.00 L1726.0 1142.00 L1727.0 1142.00 L1728.0 1142.00 L1729.0 1142.00 L1730.0 1142.00 L1731.0 1142.00 L1732.0 1142.00 L1733.0 1142.00 L1734.0 1142.00 L1735.0 1142.00 L1736.0 1142.00 L1737.0 1142.00 L1738.0 1142.00 L1739.0 1142.00 L1740.0 1142.00 L1741.0 1142.00 L1742.0 1142.00 L1743.0 1142.00 L1744.0 1142.00 L1745.0 1142.00 L1746.0 1142.00 L1747.0 1142.00 L1748.0 1142.00 L1749.0 1142.00 L1750.0 1142.00 L1751.0 1142.00 L1752.0 1142.00 L1753.0 1142.00 L1754.0 1142.00 L1755.0 1142.00 L1756.0 1142.00 L1757.0 1142.00 L1758.0 1142.00 L1759.0 1142.00 L1760.0 1142.00 L1761.0 1142.00 L1762.0 1142.00 L1763.0 1142.00 L1764.0 1142.00 L1765.0 1142.00 L1766.0 1142.00 L1767.0 1142.00 L1768.0 1142.00 L1769.0 1142.00 L1770.0 1142.00 L1771.0 1142.00 L1772.0 1142.00 L1773.0 1142.00 L1774.0 1142.00 L1775.0 1142.00 L1776.0 1142.00 L1777.0 1142.00 L1778.0 1142.00 L1779.0 1142.00 L1780.0 1142.00 L1781.0 1142.00 L1782.0 1142.00 L1783.0 1142.00 L1784.0 1142.00 L1785.0 1142.00 L1786.0 1142.00 L1787.0 1142.00 L1788.0 1142.00 L1789.0 1142.00 L1790.0 1142.00 L1791.0 1142.00 L1792.0 1142.00 L1793.0 1142.00 L1794.0 1142.00 L1795.0 1142.00 L1796.0 1142.00 L1797.0 1142.00 L1798.0 1142.00 L1799.0 1142.00 L1800.0 1142.00 L1801.0 1142.00 L1802.0 1142.00 L1803.0 1142.00 L1804.0 1142.00 L1805.0 1142.00 L1806.0 1142.00 L1807.0 1142.00 L1808.0 1142.00 L1809.0 1142.00 L1810.0 1142.00 L1811.0 1142.00 L1812.0 1142.00 L1813.0 1142.00 L1814.0 1142.00 L1815.0 1142.00 L1816.0 1142.00 L1817.0 1142.00 L1818.0 1142.00 L1819.0 1142.00 L1820.0 1142.00 L1821.0 1142.00 L1822.0 1142.00 L1823.0 1142.00 L1824.0 1142.00 L1825.0 1142.00 L1826.0 1142.00 L1827.0 1142.00 L1828.0 1142.00 L1829.0 1142.00 L1830.0 1142.00 L1831.0 1141.81 L1832.0 1141.27 L1833.0 1140.46 L1834.0 1139.50 L1835.0 1138.54 L1836.0 1137.73 L1837.0 1137.19 L1838.0 1137.00 L1839.0 1137.19 L1840.0 1137.73 L1841.0 1138.54 L1842.0 1139.50 L1843.0 1140.46 L1844.0 1141.27 L1845.0 1141.81 L1846.0 1142.00 L1847.0 1142.00 L1848.0 1142.00 L1849.0 1142.00 L1850.0 1142.00 L1851.0 1141.89 L1852.0 1141.56 L1853.0 1141.07 L1854.0 1140.50 L1855.0 1139.93 L1856.0 1139.44 L1857.0 1139.11 L1858.0 1139.00 L1859.0 1139.11 L1860.0 1139.44 L1861.0 1139.93 L1862.0 1140.50 L1863.0 1141.07 L1864.0 1141.56 L1865.0 1141.89 L1866.0 1142.00 L1867.0 1142.00 L1868.0 1142.00 L1869.0 1142.00 L1870.0 1142.00 L1871.0 1142.00 L1872.0 1142.00 L1873.0 1142.00 L1874.0 1142.00 L1875.0 1142.00 L1876.0 1142.00 L1877.0 1142.00 L1878.0 1142.00 L1879.0 1142.00 L1880.0 1142.00 L1881.0 1142.00 L1882.0 1142.00 L1883.0 1142.00 L1884.0 1142.00 L1885.0 1142.00 L1886.0 1142.00 L1887.0 1142.00 L1888.0 1142.00 L1889.0 1142.00 L1890.0 1142.00 L1891.0 1142.00 L1892.0 1142.00 L1893.0 1142.00 L1894.0 1142.00 L1895.0 1142.00 L1896.0 1142.00 L1897.0 1142.00 L1898.0 1142.00 L1899.0 1142.00 L1900.0 1142.00 L1901.0 1142.00 L1902.0 1142.00 L1903.0 1142.00 L1904.0 1142.00 L1905.0 1142.00 L1906.0 1142.00 L1907.0 1142.00 L1908.0 1142.00 L1909.0 1142.00 L1910.0 1142.00 L1911.0 1142.00 L1912.0 1142.00 L1913.0 1142.00 L1914.0 1142.00 L1915.0 1142.00 L1916.0 1142.00 L1917.0 1142.00 L1918.0 1142.00 L1919.0 1142.00 L1920.0 1142.00 L1921.0 1142.00 L1922.0 1142.00 L1923.0 1142.00 L1924.0 1142.00 L1925.0 1142.00 L1926.0 1142.00 L1927.0 1142.00 L1928.0 1142.00 L1929.0 1142.00 L1930.0 1142.00 L1931.0 1142.00 L1932.0 1142.00 L1933.0 1142.00 L1934.0 1142.00 L1935.0 1142.00 L1936.0 1142.00 L1937.0 1142.00 L1938.0 1142.00 L1939.0 1142.00 L1940.0 1142.00 L1941.0 1142.00 L1942.0 1142.00 L1943.0 1142.00 L1944.0 1142.00 L1945.0 1142.00 L1946.0 1142.00 L1947.0 1142.00 L1948.0 1142.00 L1949.0 1142.00 L1950.0 1142.00 L1951.0 1142.00 L1952.0 1142.00 L1953.0 1142.00 L1954.0 1142.00 L1955.0 1142.00 L1956.0 1142.00 L1957.0 1142.00 L1958.0 1142.00 L1959.0 1142.00 L1960.0 1142.00 L1961.0 1142.00 L1962.0 1142.00 L1963.0 1142.00 L1964.0 1142.00 L1965.0 1142.00 L1966.0 1142.00 L1967.0 1142.00 L1968.0 1142.00 L1969.0 1142.00 L1970.0 1142.00 L1971.0 1142.00 L1972.0 1142.00 L1973.0 1142.00 L1974.0 1142.00 L1975.0 1142.00 L1976.0 1142.00 L1977.0 1142.00 L1978.0 1142.00 L1979.0 1142.00 L1980.0 1142.00 L1981.0 1142.00 L1982.0 1142.00 L1983.0 1142.00 L1984.0 1142.00 L1985.0 1142.00 L1986.0 1142.00 L1987.0 1142.00 L1988.0 1142.00 L1989.0 1142.00 L1990.0 1142.00 L1991.0 1142.00 L1992.0 1142.00 L1993.0 1142.00 L1994.0 1142.00 L1995.0 1142.00 L1996.0 1142.00 L1997.0 1142.00 L1998.0 1142.00 L1999.0 1142.00 L2000.0 1142.00 L2001 1142 Z" fill="rgba(153,153,153,0.18)" stroke="#8c8c8c" stroke-width="1.1"/><path d="M432 1142 L433.0 1142.00 L434.0 1142.00 L435.0 1142.00 L436.0 1142.00 L437.0 1142.00 L438.0 1142.00 L439.0 1142.00 L440.0 1142.00 L441.0 1142.00 L442.0 1142.00 L443.0 1142.00 L444.0 1142.00 L445.0 1142.00 L446.0 1142.00 L447.0 1142.00 L448.0 1142.00 L449.0 1142.00 L450.0 1142.00 L451.0 1142.00 L452.0 1142.00 L453.0 1142.00 L454.0 1142.00 L455.0 1142.00 L456.0 1142.00 L457.0 1142.00 L458.0 1142.00 L459.0 1142.00 L460.0 1142.00 L461.0 1142.00 L462.0 1142.00 L463.0 1142.00 L464.0 1142.00 L465.0 1142.00 L466.0 1142.00 L467.0 1142.00 L468.0 1142.00 L469.0 1142.00 L470.0 1142.00 L471.0 1142.00 L472.0 1142.00 L473.0 1142.00 L474.0 1142.00 L475.0 1142.00 L476.0 1142.00 L477.0 1142.00 L478.0 1142.00 L479.0 1142.00 L480.0 1142.00 L481.0 1142.00 L482.0 1142.00 L483.0 1142.00 L484.0 1142.00 L485.0 1141.73 L486.0 1141.00 L487.0 1140.00 L488.0 1139.00 L489.0 1138.27 L490.0 1138.00 L491.0 1138.27 L492.0 1139.00 L493.0 1140.00 L494.0 1141.00 L495.0 1141.73 L496.0 1142.00 L497.0 1142.00 L498.0 1142.00 L499.0 1142.00 L500.0 1142.00 L501.0 1142.00 L502.0 1142.00 L503.0 1142.00 L504.0 1142.00 L505.0 1142.00 L506.0 1142.00 L507.0 1142.00 L508.0 1142.00 L509.0 1142.00 L510.0 1141.91 L511.0 1141.18 L512.0 1139.80 L513.0 1137.90 L514.0 1135.67 L515.0 1133.33 L516.0 1131.10 L517.0 1129.20 L518.0 1127.82 L519.0 1127.09 L520.0 1127.09 L521.0 1127.82 L522.0 1129.20 L523.0 1131.10 L524.0 1133.33 L525.0 1135.67 L526.0 1137.90 L527.0 1139.80 L528.0 1141.18 L529.0 1140.50 L530.0 1139.47 L531.0 1139.00 L532.0 1139.00 L533.0 1139.00 L534.0 1139.00 L535.0 1139.00 L536.0 1139.00 L537.0 1139.00 L538.0 1139.00 L539.0 1139.00 L540.0 1139.00 L541.0 1139.00 L542.0 1139.00 L543.0 1139.00 L544.0 1139.47 L545.0 1140.50 L546.0 1141.53 L547.0 1142.00 L548.0 1142.00 L549.0 1142.00 L550.0 1142.00 L551.0 1142.00 L552.0 1142.00 L553.0 1142.00 L554.0 1142.00 L555.0 1142.00 L556.0 1142.00 L557.0 1142.00 L558.0 1142.00 L559.0 1142.00 L560.0 1142.00 L561.0 1142.00 L562.0 1142.00 L563.0 1142.00 L564.0 1142.00 L565.0 1142.00 L566.0 1142.00 L567.0 1142.00 L568.0 1142.00 L569.0 1142.00 L570.0 1142.00 L571.0 1142.00 L572.0 1142.00 L573.0 1142.00 L574.0 1142.00 L575.0 1142.00 L576.0 1142.00 L577.0 1142.00 L578.0 1142.00 L579.0 1142.00 L580.0 1142.00 L581.0 1142.00 L582.0 1142.00 L583.0 1142.00 L584.0 1142.00 L585.0 1142.00 L586.0 1142.00 L587.0 1142.00 L588.0 1142.00 L589.0 1142.00 L590.0 1142.00 L591.0 1142.00 L592.0 1142.00 L593.0 1142.00 L594.0 1142.00 L595.0 1141.76 L596.0 1140.83 L597.0 1139.31 L598.0 1137.41 L599.0 1135.39 L600.0 1133.52 L601.0 1132.05 L602.0 1131.18 L603.0 1131.03 L604.0 1131.62 L605.0 1132.87 L606.0 1134.61 L607.0 1136.60 L608.0 1138.58 L609.0 1140.28 L610.0 1141.47 L611.0 1141.98 L612.0 1142.00 L613.0 1142.00 L614.0 1142.00 L615.0 1142.00 L616.0 1142.00 L617.0 1142.00 L618.0 1142.00 L619.0 1142.00 L620.0 1141.56 L621.0 1140.44 L622.0 1139.00 L623.0 1137.56 L624.0 1136.44 L625.0 1136.00 L626.0 1136.00 L627.0 1136.00 L628.0 1136.00 L629.0 1136.00 L630.0 1136.00 L631.0 1136.00 L632.0 1136.00 L633.0 1136.00 L634.0 1136.00 L635.0 1136.00 L636.0 1136.00 L637.0 1136.44 L638.0 1137.56 L639.0 1139.00 L640.0 1140.44 L641.0 1141.56 L642.0 1142.00 L643.0 1142.00 L644.0 1142.00 L645.0 1142.00 L646.0 1142.00 L647.0 1142.00 L648.0 1142.00 L649.0 1142.00 L650.0 1142.00 L651.0 1141.56 L652.0 1140.44 L653.0 1139.00 L654.0 1137.56 L655.0 1136.44 L656.0 1136.00 L657.0 1136.00 L658.0 1136.00 L659.0 1136.00 L660.0 1136.00 L661.0 1136.00 L662.0 1136.00 L663.0 1136.00 L664.0 1136.00 L665.0 1136.00 L666.0 1136.00 L667.0 1136.00 L668.0 1136.00 L669.0 1136.44 L670.0 1137.56 L671.0 1139.00 L672.0 1140.44 L673.0 1141.56 L674.0 1142.00 L675.0 1142.00 L676.0 1142.00 L677.0 1142.00 L678.0 1142.00 L679.0 1142.00 L680.0 1141.48 L681.0 1140.19 L682.0 1138.50 L683.0 1136.81 L684.0 1135.52 L685.0 1135.00 L686.0 1135.00 L687.0 1135.00 L688.0 1135.00 L689.0 1135.00 L690.0 1135.00 L691.0 1135.00 L692.0 1135.00 L693.0 1135.00 L694.0 1135.00 L695.0 1135.00 L696.0 1135.00 L697.0 1135.00 L698.0 1135.00 L699.0 1135.00 L700.0 1135.52 L701.0 1136.81 L702.0 1138.50 L703.0 1140.19 L704.0 1141.48 L705.0 1142.00 L706.0 1142.00 L707.0 1142.00 L708.0 1142.00 L709.0 1142.00 L710.0 1142.00 L711.0 1142.00 L712.0 1141.56 L713.0 1140.44 L714.0 1139.00 L715.0 1137.56 L716.0 1136.44 L717.0 1136.00 L718.0 1136.00 L719.0 1136.00 L720.0 1136.00 L721.0 1136.00 L722.0 1136.00 L723.0 1136.00 L724.0 1136.00 L725.0 1136.00 L726.0 1136.00 L727.0 1136.00 L728.0 1136.00 L729.0 1136.00 L730.0 1136.00 L731.0 1136.44 L732.0 1137.56 L733.0 1139.00 L734.0 1140.44 L735.0 1141.56 L736.0 1142.00 L737.0 1142.00 L738.0 1142.00 L739.0 1142.00 L740.0 1142.00 L741.0 1142.00 L742.0 1141.98 L743.0 1141.62 L744.0 1140.86 L745.0 1139.81 L746.0 1138.65 L747.0 1137.53 L748.0 1136.64 L749.0 1136.11 L750.0 1136.02 L751.0 1136.38 L752.0 1137.14 L753.0 1138.19 L754.0 1139.35 L755.0 1140.47 L756.0 1141.36 L757.0 1141.89 L758.0 1142.00 L759.0 1142.00 L760.0 1142.00 L761.0 1142.00 L762.0 1142.00 L763.0 1142.00 L764.0 1142.00 L765.0 1142.00 L766.0 1142.00 L767.0 1142.00 L768.0 1142.00 L769.0 1142.00 L770.0 1142.00 L771.0 1142.00 L772.0 1142.00 L773.0 1142.00 L774.0 1142.00 L775.0 1142.00 L776.0 1142.00 L777.0 1142.00 L778.0 1142.00 L779.0 1142.00 L780.0 1142.00 L781.0 1142.00 L782.0 1142.00 L783.0 1142.00 L784.0 1142.00 L785.0 1142.00 L786.0 1142.00 L787.0 1142.00 L788.0 1142.00 L789.0 1142.00 L790.0 1142.00 L791.0 1142.00 L792.0 1142.00 L793.0 1142.00 L794.0 1142.00 L795.0 1142.00 L796.0 1142.00 L797.0 1142.00 L798.0 1142.00 L799.0 1142.00 L800.0 1142.00 L801.0 1142.00 L802.0 1142.00 L803.0 1142.00 L804.0 1142.00 L805.0 1142.00 L806.0 1142.00 L807.0 1142.00 L808.0 1142.00 L809.0 1142.00 L810.0 1142.00 L811.0 1142.00 L812.0 1142.00 L813.0 1142.00 L814.0 1142.00 L815.0 1142.00 L816.0 1142.00 L817.0 1142.00 L818.0 1142.00 L819.0 1142.00 L820.0 1142.00 L821.0 1142.00 L822.0 1142.00 L823.0 1142.00 L824.0 1142.00 L825.0 1142.00 L826.0 1142.00 L827.0 1142.00 L828.0 1142.00 L829.0 1142.00 L830.0 1142.00 L831.0 1142.00 L832.0 1142.00 L833.0 1142.00 L834.0 1142.00 L835.0 1142.00 L836.0 1142.00 L837.0 1142.00 L838.0 1142.00 L839.0 1142.00 L840.0 1142.00 L841.0 1142.00 L842.0 1142.00 L843.0 1142.00 L844.0 1142.00 L845.0 1142.00 L846.0 1142.00 L847.0 1142.00 L848.0 1142.00 L849.0 1142.00 L850.0 1142.00 L851.0 1142.00 L852.0 1142.00 L853.0 1142.00 L854.0 1142.00 L855.0 1142.00 L856.0 1142.00 L857.0 1142.00 L858.0 1142.00 L859.0 1142.00 L860.0 1142.00 L861.0 1142.00 L862.0 1142.00 L863.0 1142.00 L864.0 1142.00 L865.0 1142.00 L866.0 1142.00 L867.0 1142.00 L868.0 1142.00 L869.0 1142.00 L870.0 1142.00 L871.0 1142.00 L872.0 1142.00 L873.0 1142.00 L874.0 1142.00 L875.0 1142.00 L876.0 1142.00 L877.0 1142.00 L878.0 1142.00 L879.0 1142.00 L880.0 1142.00 L881.0 1142.00 L882.0 1142.00 L883.0 1142.00 L884.0 1142.00 L885.0 1142.00 L886.0 1142.00 L887.0 1142.00 L888.0 1142.00 L889.0 1142.00 L890.0 1142.00 L891.0 1141.96 L892.0 1141.83 L893.0 1141.63 L894.0 1141.38 L895.0 1141.07 L896.0 1140.75 L897.0 1140.43 L898.0 1140.12 L899.0 1139.87 L900.0 1139.67 L901.0 1139.54 L902.0 1139.50 L903.0 1139.54 L904.0 1139.67 L905.0 1139.87 L906.0 1140.12 L907.0 1140.43 L908.0 1140.75 L909.0 1141.07 L910.0 1141.38 L911.0 1141.63 L912.0 1141.83 L913.0 1141.96 L914.0 1142.00 L915.0 1142.00 L916.0 1142.00 L917.0 1142.00 L918.0 1142.00 L919.0 1142.00 L920.0 1142.00 L921.0 1142.00 L922.0 1142.00 L923.0 1142.00 L924.0 1142.00 L925.0 1142.00 L926.0 1142.00 L927.0 1142.00 L928.0 1142.00 L929.0 1142.00 L930.0 1142.00 L931.0 1142.00 L932.0 1142.00 L933.0 1142.00 L934.0 1142.00 L935.0 1142.00 L936.0 1142.00 L937.0 1142.00 L938.0 1142.00 L939.0 1142.00 L940.0 1142.00 L941.0 1142.00 L942.0 1142.00 L943.0 1142.00 L944.0 1142.00 L945.0 1142.00 L946.0 1142.00 L947.0 1142.00 L948.0 1142.00 L949.0 1142.00 L950.0 1142.00 L951.0 1142.00 L952.0 1142.00 L953.0 1142.00 L954.0 1142.00 L955.0 1142.00 L956.0 1142.00 L957.0 1142.00 L958.0 1142.00 L959.0 1142.00 L960.0 1142.00 L961.0 1142.00 L962.0 1142.00 L963.0 1142.00 L964.0 1142.00 L965.0 1142.00 L966.0 1142.00 L967.0 1142.00 L968.0 1142.00 L969.0 1142.00 L970.0 1142.00 L971.0 1142.00 L972.0 1142.00 L973.0 1142.00 L974.0 1142.00 L975.0 1142.00 L976.0 1142.00 L977.0 1142.00 L978.0 1142.00 L979.0 1142.00 L980.0 1142.00 L981.0 1142.00 L982.0 1142.00 L983.0 1142.00 L984.0 1142.00 L985.0 1142.00 L986.0 1142.00 L987.0 1142.00 L988.0 1142.00 L989.0 1142.00 L990.0 1142.00 L991.0 1142.00 L992.0 1142.00 L993.0 1142.00 L994.0 1142.00 L995.0 1142.00 L996.0 1142.00 L997.0 1142.00 L998.0 1142.00 L999.0 1142.00 L1000.0 1142.00 L1001.0 1142.00 L1002.0 1142.00 L1003.0 1142.00 L1004.0 1142.00 L1005.0 1142.00 L1006.0 1142.00 L1007.0 1142.00 L1008.0 1142.00 L1009.0 1142.00 L1010.0 1142.00 L1011.0 1142.00 L1012.0 1142.00 L1013.0 1142.00 L1014.0 1142.00 L1015.0 1142.00 L1016.0 1142.00 L1017.0 1142.00 L1018.0 1142.00 L1019.0 1142.00 L1020.0 1142.00 L1021.0 1142.00 L1022.0 1142.00 L1023.0 1142.00 L1024.0 1142.00 L1025.0 1142.00 L1026.0 1142.00 L1027.0 1142.00 L1028.0 1142.00 L1029.0 1142.00 L1030.0 1142.00 L1031.0 1142.00 L1032.0 1142.00 L1033.0 1142.00 L1034.0 1142.00 L1035.0 1142.00 L1036.0 1142.00 L1037.0 1142.00 L1038.0 1142.00 L1039.0 1142.00 L1040.0 1142.00 L1041.0 1142.00 L1042.0 1142.00 L1043.0 1142.00 L1044.0 1142.00 L1045.0 1142.00 L1046.0 1142.00 L1047.0 1142.00 L1048.0 1142.00 L1049.0 1142.00 L1050.0 1142.00 L1051.0 1142.00 L1052.0 1142.00 L1053.0 1142.00 L1054.0 1142.00 L1055.0 1142.00 L1056.0 1142.00 L1057.0 1142.00 L1058.0 1142.00 L1059.0 1142.00 L1060.0 1142.00 L1061.0 1142.00 L1062.0 1142.00 L1063.0 1142.00 L1064.0 1142.00 L1065.0 1142.00 L1066.0 1142.00 L1067.0 1142.00 L1068.0 1142.00 L1069.0 1142.00 L1070.0 1142.00 L1071.0 1142.00 L1072.0 1142.00 L1073.0 1142.00 L1074.0 1142.00 L1075.0 1142.00 L1076.0 1142.00 L1077.0 1142.00 L1078.0 1142.00 L1079.0 1142.00 L1080.0 1142.00 L1081.0 1142.00 L1082.0 1142.00 L1083.0 1142.00 L1084.0 1142.00 L1085.0 1142.00 L1086.0 1142.00 L1087.0 1142.00 L1088.0 1142.00 L1089.0 1142.00 L1090.0 1142.00 L1091.0 1142.00 L1092.0 1142.00 L1093.0 1142.00 L1094.0 1142.00 L1095.0 1142.00 L1096.0 1142.00 L1097.0 1142.00 L1098.0 1142.00 L1099.0 1142.00 L1100.0 1142.00 L1101.0 1142.00 L1102.0 1142.00 L1103.0 1142.00 L1104.0 1142.00 L1105.0 1142.00 L1106.0 1142.00 L1107.0 1142.00 L1108.0 1142.00 L1109.0 1142.00 L1110.0 1142.00 L1111.0 1142.00 L1112.0 1142.00 L1113.0 1142.00 L1114.0 1142.00 L1115.0 1142.00 L1116.0 1142.00 L1117.0 1142.00 L1118.0 1142.00 L1119.0 1142.00 L1120.0 1142.00 L1121.0 1142.00 L1122.0 1142.00 L1123.0 1142.00 L1124.0 1142.00 L1125.0 1142.00 L1126.0 1142.00 L1127.0 1142.00 L1128.0 1142.00 L1129.0 1142.00 L1130.0 1142.00 L1131.0 1142.00 L1132.0 1142.00 L1133.0 1142.00 L1134.0 1142.00 L1135.0 1142.00 L1136.0 1142.00 L1137.0 1142.00 L1138.0 1142.00 L1139.0 1142.00 L1140.0 1142.00 L1141.0 1142.00 L1142.0 1142.00 L1143.0 1142.00 L1144.0 1142.00 L1145.0 1142.00 L1146.0 1142.00 L1147.0 1142.00 L1148.0 1142.00 L1149.0 1142.00 L1150.0 1142.00 L1151.0 1142.00 L1152.0 1142.00 L1153.0 1142.00 L1154.0 1142.00 L1155.0 1142.00 L1156.0 1142.00 L1157.0 1142.00 L1158.0 1142.00 L1159.0 1142.00 L1160.0 1142.00 L1161.0 1142.00 L1162.0 1142.00 L1163.0 1142.00 L1164.0 1142.00 L1165.0 1142.00 L1166.0 1142.00 L1167.0 1142.00 L1168.0 1142.00 L1169.0 1142.00 L1170.0 1142.00 L1171.0 1142.00 L1172.0 1142.00 L1173.0 1142.00 L1174.0 1142.00 L1175.0 1142.00 L1176.0 1142.00 L1177.0 1142.00 L1178.0 1142.00 L1179.0 1142.00 L1180.0 1142.00 L1181.0 1142.00 L1182.0 1142.00 L1183.0 1142.00 L1184.0 1142.00 L1185.0 1142.00 L1186.0 1142.00 L1187.0 1142.00 L1188.0 1142.00 L1189.0 1142.00 L1190.0 1142.00 L1191.0 1142.00 L1192.0 1142.00 L1193.0 1142.00 L1194.0 1142.00 L1195.0 1142.00 L1196.0 1142.00 L1197.0 1142.00 L1198.0 1142.00 L1199.0 1142.00 L1200.0 1142.00 L1201.0 1142.00 L1202.0 1142.00 L1203.0 1141.51 L1204.0 1140.10 L1205.0 1137.99 L1206.0 1135.50 L1207.0 1133.01 L1208.0 1130.90 L1209.0 1129.49 L1210.0 1129.00 L1211.0 1129.49 L1212.0 1130.90 L1213.0 1133.01 L1214.0 1135.50 L1215.0 1137.99 L1216.0 1138.00 L1217.0 1138.00 L1218.0 1138.00 L1219.0 1138.00 L1220.0 1138.00 L1221.0 1138.00 L1222.0 1138.00 L1223.0 1138.00 L1224.0 1138.00 L1225.0 1138.00 L1226.0 1138.00 L1227.0 1138.00 L1228.0 1138.00 L1229.0 1138.00 L1230.0 1138.00 L1231.0 1138.00 L1232.0 1138.30 L1233.0 1139.04 L1234.0 1140.00 L1235.0 1140.96 L1236.0 1141.70 L1237.0 1142.00 L1238.0 1142.00 L1239.0 1142.00 L1240.0 1142.00 L1241.0 1142.00 L1242.0 1142.00 L1243.0 1142.00 L1244.0 1142.00 L1245.0 1142.00 L1246.0 1142.00 L1247.0 1142.00 L1248.0 1142.00 L1249.0 1142.00 L1250.0 1142.00 L1251.0 1142.00 L1252.0 1142.00 L1253.0 1142.00 L1254.0 1142.00 L1255.0 1142.00 L1256.0 1142.00 L1257.0 1142.00 L1258.0 1142.00 L1259.0 1142.00 L1260.0 1142.00 L1261.0 1142.00 L1262.0 1142.00 L1263.0 1142.00 L1264.0 1142.00 L1265.0 1142.00 L1266.0 1142.00 L1267.0 1142.00 L1268.0 1142.00 L1269.0 1142.00 L1270.0 1142.00 L1271.0 1142.00 L1272.0 1142.00 L1273.0 1142.00 L1274.0 1142.00 L1275.0 1142.00 L1276.0 1142.00 L1277.0 1142.00 L1278.0 1142.00 L1279.0 1142.00 L1280.0 1142.00 L1281.0 1142.00 L1282.0 1142.00 L1283.0 1142.00 L1284.0 1142.00 L1285.0 1142.00 L1286.0 1142.00 L1287.0 1142.00 L1288.0 1142.00 L1289.0 1142.00 L1290.0 1142.00 L1291.0 1142.00 L1292.0 1142.00 L1293.0 1142.00 L1294.0 1142.00 L1295.0 1142.00 L1296.0 1142.00 L1297.0 1142.00 L1298.0 1142.00 L1299.0 1142.00 L1300.0 1142.00 L1301.0 1142.00 L1302.0 1142.00 L1303.0 1142.00 L1304.0 1142.00 L1305.0 1142.00 L1306.0 1142.00 L1307.0 1142.00 L1308.0 1142.00 L1309.0 1142.00 L1310.0 1142.00 L1311.0 1142.00 L1312.0 1142.00 L1313.0 1142.00 L1314.0 1142.00 L1315.0 1142.00 L1316.0 1142.00 L1317.0 1142.00 L1318.0 1142.00 L1319.0 1142.00 L1320.0 1142.00 L1321.0 1142.00 L1322.0 1142.00 L1323.0 1142.00 L1324.0 1142.00 L1325.0 1142.00 L1326.0 1142.00 L1327.0 1142.00 L1328.0 1142.00 L1329.0 1142.00 L1330.0 1142.00 L1331.0 1142.00 L1332.0 1142.00 L1333.0 1142.00 L1334.0 1142.00 L1335.0 1142.00 L1336.0 1142.00 L1337.0 1142.00 L1338.0 1142.00 L1339.0 1142.00 L1340.0 1142.00 L1341.0 1142.00 L1342.0 1142.00 L1343.0 1142.00 L1344.0 1142.00 L1345.0 1142.00 L1346.0 1142.00 L1347.0 1142.00 L1348.0 1142.00 L1349.0 1142.00 L1350.0 1142.00 L1351.0 1142.00 L1352.0 1142.00 L1353.0 1142.00 L1354.0 1142.00 L1355.0 1142.00 L1356.0 1142.00 L1357.0 1142.00 L1358.0 1142.00 L1359.0 1142.00 L1360.0 1142.00 L1361.0 1142.00 L1362.0 1142.00 L1363.0 1142.00 L1364.0 1142.00 L1365.0 1142.00 L1366.0 1142.00 L1367.0 1142.00 L1368.0 1142.00 L1369.0 1142.00 L1370.0 1142.00 L1371.0 1142.00 L1372.0 1142.00 L1373.0 1142.00 L1374.0 1142.00 L1375.0 1142.00 L1376.0 1142.00 L1377.0 1142.00 L1378.0 1142.00 L1379.0 1142.00 L1380.0 1142.00 L1381.0 1142.00 L1382.0 1142.00 L1383.0 1142.00 L1384.0 1142.00 L1385.0 1142.00 L1386.0 1142.00 L1387.0 1142.00 L1388.0 1142.00 L1389.0 1142.00 L1390.0 1142.00 L1391.0 1142.00 L1392.0 1142.00 L1393.0 1142.00 L1394.0 1142.00 L1395.0 1142.00 L1396.0 1142.00 L1397.0 1142.00 L1398.0 1142.00 L1399.0 1142.00 L1400.0 1142.00 L1401.0 1142.00 L1402.0 1142.00 L1403.0 1142.00 L1404.0 1142.00 L1405.0 1142.00 L1406.0 1142.00 L1407.0 1142.00 L1408.0 1142.00 L1409.0 1142.00 L1410.0 1142.00 L1411.0 1142.00 L1412.0 1142.00 L1413.0 1142.00 L1414.0 1142.00 L1415.0 1142.00 L1416.0 1142.00 L1417.0 1142.00 L1418.0 1142.00 L1419.0 1142.00 L1420.0 1142.00 L1421.0 1142.00 L1422.0 1142.00 L1423.0 1142.00 L1424.0 1142.00 L1425.0 1142.00 L1426.0 1142.00 L1427.0 1141.63 L1428.0 1140.70 L1429.0 1139.50 L1430.0 1138.30 L1431.0 1137.37 L1432.0 1137.00 L1433.0 1137.00 L1434.0 1137.00 L1435.0 1137.00 L1436.0 1137.00 L1437.0 1137.00 L1438.0 1137.00 L1439.0 1137.00 L1440.0 1137.00 L1441.0 1137.00 L1442.0 1137.00 L1443.0 1137.00 L1444.0 1137.00 L1445.0 1137.00 L1446.0 1137.00 L1447.0 1137.00 L1448.0 1137.00 L1449.0 1137.00 L1450.0 1137.00 L1451.0 1137.00 L1452.0 1137.00 L1453.0 1137.00 L1454.0 1137.00 L1455.0 1137.00 L1456.0 1137.00 L1457.0 1137.00 L1458.0 1137.00 L1459.0 1137.00 L1460.0 1137.00 L1461.0 1137.00 L1462.0 1137.00 L1463.0 1137.00 L1464.0 1137.00 L1465.0 1137.00 L1466.0 1137.00 L1467.0 1137.00 L1468.0 1137.00 L1469.0 1137.00 L1470.0 1137.00 L1471.0 1137.00 L1472.0 1137.00 L1473.0 1137.00 L1474.0 1137.37 L1475.0 1138.30 L1476.0 1139.50 L1477.0 1140.70 L1478.0 1141.63 L1479.0 1142.00 L1480.0 1142.00 L1481.0 1142.00 L1482.0 1142.00 L1483.0 1142.00 L1484.0 1142.00 L1485.0 1141.63 L1486.0 1140.70 L1487.0 1139.50 L1488.0 1138.30 L1489.0 1137.37 L1490.0 1137.00 L1491.0 1137.00 L1492.0 1137.00 L1493.0 1137.00 L1494.0 1137.00 L1495.0 1137.00 L1496.0 1137.00 L1497.0 1137.00 L1498.0 1137.00 L1499.0 1137.00 L1500.0 1137.00 L1501.0 1137.00 L1502.0 1137.00 L1503.0 1137.00 L1504.0 1137.00 L1505.0 1137.00 L1506.0 1137.37 L1507.0 1138.30 L1508.0 1139.50 L1509.0 1140.70 L1510.0 1141.63 L1511.0 1142.00 L1512.0 1142.00 L1513.0 1142.00 L1514.0 1142.00 L1515.0 1142.00 L1516.0 1142.00 L1517.0 1142.00 L1518.0 1142.00 L1519.0 1141.63 L1520.0 1140.70 L1521.0 1139.50 L1522.0 1138.30 L1523.0 1137.37 L1524.0 1137.00 L1525.0 1137.00 L1526.0 1137.00 L1527.0 1137.00 L1528.0 1137.00 L1529.0 1137.00 L1530.0 1137.00 L1531.0 1137.00 L1532.0 1137.00 L1533.0 1137.00 L1534.0 1137.00 L1535.0 1137.00 L1536.0 1137.00 L1537.0 1137.37 L1538.0 1138.30 L1539.0 1139.50 L1540.0 1140.70 L1541.0 1141.63 L1542.0 1142.00 L1543.0 1142.00 L1544.0 1142.00 L1545.0 1142.00 L1546.0 1142.00 L1547.0 1142.00 L1548.0 1142.00 L1549.0 1141.63 L1550.0 1140.70 L1551.0 1139.50 L1552.0 1138.30 L1553.0 1137.37 L1554.0 1137.00 L1555.0 1137.00 L1556.0 1137.00 L1557.0 1137.00 L1558.0 1137.00 L1559.0 1137.00 L1560.0 1137.00 L1561.0 1137.00 L1562.0 1137.00 L1563.0 1137.00 L1564.0 1137.00 L1565.0 1137.00 L1566.0 1137.00 L1567.0 1137.00 L1568.0 1137.37 L1569.0 1138.30 L1570.0 1139.50 L1571.0 1140.70 L1572.0 1141.63 L1573.0 1142.00 L1574.0 1142.00 L1575.0 1142.00 L1576.0 1142.00 L1577.0 1142.00 L1578.0 1142.00 L1579.0 1142.00 L1580.0 1141.85 L1581.0 1141.41 L1582.0 1140.77 L1583.0 1140.00 L1584.0 1139.23 L1585.0 1138.59 L1586.0 1138.15 L1587.0 1138.00 L1588.0 1138.15 L1589.0 1138.59 L1590.0 1139.23 L1591.0 1140.00 L1592.0 1140.77 L1593.0 1141.41 L1594.0 1141.85 L1595.0 1142.00 L1596.0 1142.00 L1597.0 1142.00 L1598.0 1142.00 L1599.0 1142.00 L1600.0 1142.00 L1601.0 1142.00 L1602.0 1142.00 L1603.0 1142.00 L1604.0 1142.00 L1605.0 1142.00 L1606.0 1142.00 L1607.0 1142.00 L1608.0 1142.00 L1609.0 1142.00 L1610.0 1142.00 L1611.0 1142.00 L1612.0 1142.00 L1613.0 1142.00 L1614.0 1142.00 L1615.0 1142.00 L1616.0 1142.00 L1617.0 1142.00 L1618.0 1142.00 L1619.0 1142.00 L1620.0 1142.00 L1621.0 1142.00 L1622.0 1142.00 L1623.0 1142.00 L1624.0 1142.00 L1625.0 1142.00 L1626.0 1142.00 L1627.0 1142.00 L1628.0 1142.00 L1629.0 1142.00 L1630.0 1142.00 L1631.0 1142.00 L1632.0 1142.00 L1633.0 1142.00 L1634.0 1142.00 L1635.0 1142.00 L1636.0 1142.00 L1637.0 1142.00 L1638.0 1142.00 L1639.0 1142.00 L1640.0 1142.00 L1641.0 1142.00 L1642.0 1142.00 L1643.0 1142.00 L1644.0 1142.00 L1645.0 1142.00 L1646.0 1142.00 L1647.0 1142.00 L1648.0 1142.00 L1649.0 1142.00 L1650.0 1142.00 L1651.0 1142.00 L1652.0 1142.00 L1653.0 1142.00 L1654.0 1142.00 L1655.0 1142.00 L1656.0 1142.00 L1657.0 1142.00 L1658.0 1142.00 L1659.0 1142.00 L1660.0 1142.00 L1661.0 1142.00 L1662.0 1142.00 L1663.0 1142.00 L1664.0 1142.00 L1665.0 1142.00 L1666.0 1142.00 L1667.0 1142.00 L1668.0 1142.00 L1669.0 1142.00 L1670.0 1142.00 L1671.0 1142.00 L1672.0 1142.00 L1673.0 1142.00 L1674.0 1142.00 L1675.0 1142.00 L1676.0 1142.00 L1677.0 1142.00 L1678.0 1142.00 L1679.0 1142.00 L1680.0 1142.00 L1681.0 1142.00 L1682.0 1142.00 L1683.0 1142.00 L1684.0 1142.00 L1685.0 1142.00 L1686.0 1142.00 L1687.0 1142.00 L1688.0 1142.00 L1689.0 1142.00 L1690.0 1142.00 L1691.0 1142.00 L1692.0 1142.00 L1693.0 1142.00 L1694.0 1142.00 L1695.0 1142.00 L1696.0 1142.00 L1697.0 1142.00 L1698.0 1142.00 L1699.0 1142.00 L1700.0 1142.00 L1701.0 1142.00 L1702.0 1142.00 L1703.0 1142.00 L1704.0 1142.00 L1705.0 1142.00 L1706.0 1142.00 L1707.0 1142.00 L1708.0 1142.00 L1709.0 1142.00 L1710.0 1142.00 L1711.0 1142.00 L1712.0 1142.00 L1713.0 1142.00 L1714.0 1142.00 L1715.0 1142.00 L1716.0 1142.00 L1717.0 1142.00 L1718.0 1142.00 L1719.0 1142.00 L1720.0 1142.00 L1721.0 1142.00 L1722.0 1142.00 L1723.0 1142.00 L1724.0 1142.00 L1725.0 1142.00 L1726.0 1142.00 L1727.0 1142.00 L1728.0 1142.00 L1729.0 1142.00 L1730.0 1142.00 L1731.0 1142.00 L1732.0 1142.00 L1733.0 1142.00 L1734.0 1142.00 L1735.0 1142.00 L1736.0 1142.00 L1737.0 1142.00 L1738.0 1142.00 L1739.0 1142.00 L1740.0 1142.00 L1741.0 1142.00 L1742.0 1142.00 L1743.0 1142.00 L1744.0 1142.00 L1745.0 1142.00 L1746.0 1142.00 L1747.0 1142.00 L1748.0 1142.00 L1749.0 1142.00 L1750.0 1142.00 L1751.0 1142.00 L1752.0 1142.00 L1753.0 1142.00 L1754.0 1142.00 L1755.0 1142.00 L1756.0 1142.00 L1757.0 1142.00 L1758.0 1142.00 L1759.0 1142.00 L1760.0 1142.00 L1761.0 1142.00 L1762.0 1142.00 L1763.0 1142.00 L1764.0 1142.00 L1765.0 1142.00 L1766.0 1142.00 L1767.0 1142.00 L1768.0 1142.00 L1769.0 1142.00 L1770.0 1142.00 L1771.0 1142.00 L1772.0 1142.00 L1773.0 1142.00 L1774.0 1142.00 L1775.0 1142.00 L1776.0 1142.00 L1777.0 1142.00 L1778.0 1142.00 L1779.0 1142.00 L1780.0 1142.00 L1781.0 1142.00 L1782.0 1142.00 L1783.0 1142.00 L1784.0 1142.00 L1785.0 1142.00 L1786.0 1142.00 L1787.0 1142.00 L1788.0 1142.00 L1789.0 1142.00 L1790.0 1142.00 L1791.0 1142.00 L1792.0 1142.00 L1793.0 1142.00 L1794.0 1142.00 L1795.0 1142.00 L1796.0 1142.00 L1797.0 1142.00 L1798.0 1142.00 L1799.0 1142.00 L1800.0 1142.00 L1801.0 1142.00 L1802.0 1142.00 L1803.0 1142.00 L1804.0 1142.00 L1805.0 1142.00 L1806.0 1142.00 L1807.0 1142.00 L1808.0 1142.00 L1809.0 1142.00 L1810.0 1142.00 L1811.0 1142.00 L1812.0 1142.00 L1813.0 1142.00 L1814.0 1142.00 L1815.0 1142.00 L1816.0 1142.00 L1817.0 1142.00 L1818.0 1142.00 L1819.0 1142.00 L1820.0 1142.00 L1821.0 1142.00 L1822.0 1142.00 L1823.0 1142.00 L1824.0 1142.00 L1825.0 1142.00 L1826.0 1142.00 L1827.0 1142.00 L1828.0 1142.00 L1829.0 1142.00 L1830.0 1142.00 L1831.0 1142.00 L1832.0 1142.00 L1833.0 1142.00 L1834.0 1142.00 L1835.0 1142.00 L1836.0 1142.00 L1837.0 1142.00 L1838.0 1142.00 L1839.0 1142.00 L1840.0 1142.00 L1841.0 1142.00 L1842.0 1142.00 L1843.0 1142.00 L1844.0 1142.00 L1845.0 1142.00 L1846.0 1142.00 L1847.0 1142.00 L1848.0 1142.00 L1849.0 1142.00 L1850.0 1142.00 L1851.0 1142.00 L1852.0 1142.00 L1853.0 1142.00 L1854.0 1142.00 L1855.0 1142.00 L1856.0 1142.00 L1857.0 1142.00 L1858.0 1142.00 L1859.0 1142.00 L1860.0 1142.00 L1861.0 1142.00 L1862.0 1142.00 L1863.0 1142.00 L1864.0 1142.00 L1865.0 1142.00 L1866.0 1142.00 L1867.0 1142.00 L1868.0 1142.00 L1869.0 1142.00 L1870.0 1142.00 L1871.0 1142.00 L1872.0 1142.00 L1873.0 1142.00 L1874.0 1142.00 L1875.0 1142.00 L1876.0 1142.00 L1877.0 1142.00 L1878.0 1142.00 L1879.0 1142.00 L1880.0 1142.00 L1881.0 1142.00 L1882.0 1142.00 L1883.0 1142.00 L1884.0 1142.00 L1885.0 1142.00 L1886.0 1142.00 L1887.0 1142.00 L1888.0 1142.00 L1889.0 1142.00 L1890.0 1142.00 L1891.0 1142.00 L1892.0 1142.00 L1893.0 1142.00 L1894.0 1142.00 L1895.0 1142.00 L1896.0 1142.00 L1897.0 1142.00 L1898.0 1142.00 L1899.0 1142.00 L1900.0 1142.00 L1901.0 1142.00 L1902.0 1142.00 L1903.0 1142.00 L1904.0 1142.00 L1905.0 1142.00 L1906.0 1142.00 L1907.0 1142.00 L1908.0 1142.00 L1909.0 1142.00 L1910.0 1142.00 L1911.0 1142.00 L1912.0 1142.00 L1913.0 1142.00 L1914.0 1142.00 L1915.0 1142.00 L1916.0 1142.00 L1917.0 1142.00 L1918.0 1142.00 L1919.0 1142.00 L1920.0 1142.00 L1921.0 1142.00 L1922.0 1142.00 L1923.0 1142.00 L1924.0 1142.00 L1925.0 1142.00 L1926.0 1142.00 L1927.0 1142.00 L1928.0 1142.00 L1929.0 1142.00 L1930.0 1142.00 L1931.0 1142.00 L1932.0 1142.00 L1933.0 1142.00 L1934.0 1142.00 L1935.0 1142.00 L1936.0 1142.00 L1937.0 1142.00 L1938.0 1142.00 L1939.0 1142.00 L1940.0 1142.00 L1941.0 1142.00 L1942.0 1142.00 L1943.0 1142.00 L1944.0 1142.00 L1945.0 1142.00 L1946.0 1142.00 L1947.0 1142.00 L1948.0 1142.00 L1949.0 1142.00 L1950.0 1142.00 L1951.0 1142.00 L1952.0 1142.00 L1953.0 1142.00 L1954.0 1142.00 L1955.0 1142.00 L1956.0 1142.00 L1957.0 1142.00 L1958.0 1142.00 L1959.0 1142.00 L1960.0 1142.00 L1961.0 1142.00 L1962.0 1142.00 L1963.0 1142.00 L1964.0 1142.00 L1965.0 1142.00 L1966.0 1142.00 L1967.0 1142.00 L1968.0 1142.00 L1969.0 1142.00 L1970.0 1142.00 L1971.0 1142.00 L1972.0 1142.00 L1973.0 1142.00 L1974.0 1142.00 L1975.0 1142.00 L1976.0 1142.00 L1977.0 1142.00 L1978.0 1142.00 L1979.0 1142.00 L1980.0 1142.00 L1981.0 1142.00 L1982.0 1142.00 L1983.0 1142.00 L1984.0 1142.00 L1985.0 1142.00 L1986.0 1142.00 L1987.0 1142.00 L1988.0 1142.00 L1989.0 1142.00 L1990.0 1142.00 L1991.0 1142.00 L1992.0 1142.00 L1993.0 1142.00 L1994.0 1142.00 L1995.0 1142.00 L1996.0 1142.00 L1997.0 1142.00 L1998.0 1142.00 L1999.0 1142.00 L2000.0 1142.00 L2001 1142 Z" fill="rgba(255,212,80,0.25)" stroke="#d2b440" stroke-width="1.1"/><path d="M432 1142 L433.0 1142.00 L434.0 1142.00 L435.0 1142.00 L436.0 1142.00 L437.0 1142.00 L438.0 1142.00 L439.0 1142.00 L440.0 1142.00 L441.0 1142.00 L442.0 1142.00 L443.0 1142.00 L444.0 1142.00 L445.0 1142.00 L446.0 1142.00 L447.0 1142.00 L448.0 1142.00 L449.0 1142.00 L450.0 1142.00 L451.0 1142.00 L452.0 1142.00 L453.0 1142.00 L454.0 1142.00 L455.0 1142.00 L456.0 1142.00 L457.0 1142.00 L458.0 1142.00 L459.0 1142.00 L460.0 1142.00 L461.0 1142.00 L462.0 1142.00 L463.0 1142.00 L464.0 1142.00 L465.0 1142.00 L466.0 1142.00 L467.0 1142.00 L468.0 1142.00 L469.0 1142.00 L470.0 1142.00 L471.0 1142.00 L472.0 1142.00 L473.0 1142.00 L474.0 1142.00 L475.0 1142.00 L476.0 1142.00 L477.0 1142.00 L478.0 1142.00 L479.0 1142.00 L480.0 1142.00 L481.0 1142.00 L482.0 1142.00 L483.0 1142.00 L484.0 1142.00 L485.0 1142.00 L486.0 1142.00 L487.0 1142.00 L488.0 1142.00 L489.0 1142.00 L490.0 1142.00 L491.0 1142.00 L492.0 1142.00 L493.0 1142.00 L494.0 1142.00 L495.0 1142.00 L496.0 1142.00 L497.0 1142.00 L498.0 1142.00 L499.0 1142.00 L500.0 1142.00 L501.0 1142.00 L502.0 1142.00 L503.0 1142.00 L504.0 1142.00 L505.0 1142.00 L506.0 1142.00 L507.0 1142.00 L508.0 1142.00 L509.0 1142.00 L510.0 1141.98 L511.0 1141.84 L512.0 1141.56 L513.0 1141.18 L514.0 1140.73 L515.0 1140.27 L516.0 1139.82 L517.0 1139.44 L518.0 1139.16 L519.0 1139.02 L520.0 1139.02 L521.0 1139.16 L522.0 1139.44 L523.0 1139.82 L524.0 1140.27 L525.0 1140.73 L526.0 1141.18 L527.0 1141.56 L528.0 1141.84 L529.0 1141.98 L530.0 1142.00 L531.0 1142.00 L532.0 1142.00 L533.0 1142.00 L534.0 1142.00 L535.0 1142.00 L536.0 1142.00 L537.0 1142.00 L538.0 1142.00 L539.0 1142.00 L540.0 1142.00 L541.0 1142.00 L542.0 1142.00 L543.0 1142.00 L544.0 1142.00 L545.0 1141.79 L546.0 1141.30 L547.0 1140.70 L548.0 1140.21 L549.0 1140.00 L550.0 1140.00 L551.0 1140.00 L552.0 1140.00 L553.0 1140.00 L554.0 1140.00 L555.0 1140.00 L556.0 1140.21 L557.0 1140.70 L558.0 1141.30 L559.0 1141.79 L560.0 1142.00 L561.0 1142.00 L562.0 1142.00 L563.0 1142.00 L564.0 1142.00 L565.0 1142.00 L566.0 1142.00 L567.0 1142.00 L568.0 1142.00 L569.0 1142.00 L570.0 1142.00 L571.0 1142.00 L572.0 1142.00 L573.0 1142.00 L574.0 1142.00 L575.0 1141.85 L576.0 1141.48 L577.0 1141.00 L578.0 1140.52 L579.0 1140.15 L580.0 1140.00 L581.0 1140.00 L582.0 1140.00 L583.0 1140.00 L584.0 1140.00 L585.0 1140.00 L586.0 1140.00 L587.0 1140.00 L588.0 1140.00 L589.0 1140.00 L590.0 1140.15 L591.0 1140.52 L592.0 1141.00 L593.0 1141.48 L594.0 1141.85 L595.0 1142.00 L596.0 1142.00 L597.0 1142.00 L598.0 1142.00 L599.0 1142.00 L600.0 1142.00 L601.0 1142.00 L602.0 1142.00 L603.0 1142.00 L604.0 1142.00 L605.0 1142.00 L606.0 1142.00 L607.0 1142.00 L608.0 1142.00 L609.0 1142.00 L610.0 1142.00 L611.0 1142.00 L612.0 1142.00 L613.0 1142.00 L614.0 1142.00 L615.0 1142.00 L616.0 1142.00 L617.0 1142.00 L618.0 1142.00 L619.0 1142.00 L620.0 1142.00 L621.0 1142.00 L622.0 1142.00 L623.0 1142.00 L624.0 1142.00 L625.0 1142.00 L626.0 1142.00 L627.0 1142.00 L628.0 1142.00 L629.0 1142.00 L630.0 1142.00 L631.0 1142.00 L632.0 1142.00 L633.0 1142.00 L634.0 1142.00 L635.0 1142.00 L636.0 1142.00 L637.0 1142.00 L638.0 1142.00 L639.0 1142.00 L640.0 1142.00 L641.0 1142.00 L642.0 1142.00 L643.0 1142.00 L644.0 1142.00 L645.0 1142.00 L646.0 1142.00 L647.0 1142.00 L648.0 1142.00 L649.0 1142.00 L650.0 1142.00 L651.0 1142.00 L652.0 1142.00 L653.0 1142.00 L654.0 1142.00 L655.0 1142.00 L656.0 1142.00 L657.0 1142.00 L658.0 1142.00 L659.0 1142.00 L660.0 1142.00 L661.0 1142.00 L662.0 1142.00 L663.0 1142.00 L664.0 1142.00 L665.0 1142.00 L666.0 1142.00 L667.0 1142.00 L668.0 1142.00 L669.0 1142.00 L670.0 1142.00 L671.0 1142.00 L672.0 1142.00 L673.0 1142.00 L674.0 1142.00 L675.0 1142.00 L676.0 1142.00 L677.0 1142.00 L678.0 1142.00 L679.0 1142.00 L680.0 1142.00 L681.0 1142.00 L682.0 1142.00 L683.0 1142.00 L684.0 1142.00 L685.0 1142.00 L686.0 1142.00 L687.0 1142.00 L688.0 1142.00 L689.0 1142.00 L690.0 1142.00 L691.0 1142.00 L692.0 1142.00 L693.0 1142.00 L694.0 1142.00 L695.0 1142.00 L696.0 1142.00 L697.0 1142.00 L698.0 1142.00 L699.0 1142.00 L700.0 1142.00 L701.0 1142.00 L702.0 1142.00 L703.0 1142.00 L704.0 1142.00 L705.0 1142.00 L706.0 1142.00 L707.0 1142.00 L708.0 1142.00 L709.0 1142.00 L710.0 1142.00 L711.0 1142.00 L712.0 1142.00 L713.0 1142.00 L714.0 1142.00 L715.0 1142.00 L716.0 1142.00 L717.0 1142.00 L718.0 1142.00 L719.0 1142.00 L720.0 1142.00 L721.0 1142.00 L722.0 1142.00 L723.0 1142.00 L724.0 1142.00 L725.0 1142.00 L726.0 1142.00 L727.0 1142.00 L728.0 1142.00 L729.0 1142.00 L730.0 1142.00 L731.0 1142.00 L732.0 1142.00 L733.0 1142.00 L734.0 1142.00 L735.0 1142.00 L736.0 1142.00 L737.0 1142.00 L738.0 1142.00 L739.0 1142.00 L740.0 1142.00 L741.0 1142.00 L742.0 1142.00 L743.0 1142.00 L744.0 1142.00 L745.0 1142.00 L746.0 1142.00 L747.0 1142.00 L748.0 1142.00 L749.0 1142.00 L750.0 1142.00 L751.0 1142.00 L752.0 1142.00 L753.0 1142.00 L754.0 1142.00 L755.0 1142.00 L756.0 1142.00 L757.0 1142.00 L758.0 1142.00 L759.0 1142.00 L760.0 1142.00 L761.0 1142.00 L762.0 1142.00 L763.0 1142.00 L764.0 1142.00 L765.0 1142.00 L766.0 1142.00 L767.0 1142.00 L768.0 1142.00 L769.0 1142.00 L770.0 1142.00 L771.0 1142.00 L772.0 1142.00 L773.0 1142.00 L774.0 1142.00 L775.0 1142.00 L776.0 1142.00 L777.0 1142.00 L778.0 1142.00 L779.0 1142.00 L780.0 1142.00 L781.0 1142.00 L782.0 1142.00 L783.0 1142.00 L784.0 1142.00 L785.0 1142.00 L786.0 1142.00 L787.0 1142.00 L788.0 1142.00 L789.0 1142.00 L790.0 1142.00 L791.0 1142.00 L792.0 1142.00 L793.0 1142.00 L794.0 1142.00 L795.0 1142.00 L796.0 1142.00 L797.0 1142.00 L798.0 1142.00 L799.0 1142.00 L800.0 1142.00 L801.0 1142.00 L802.0 1142.00 L803.0 1142.00 L804.0 1142.00 L805.0 1142.00 L806.0 1142.00 L807.0 1142.00 L808.0 1142.00 L809.0 1142.00 L810.0 1142.00 L811.0 1142.00 L812.0 1142.00 L813.0 1142.00 L814.0 1142.00 L815.0 1142.00 L816.0 1142.00 L817.0 1142.00 L818.0 1142.00 L819.0 1142.00 L820.0 1142.00 L821.0 1142.00 L822.0 1142.00 L823.0 1142.00 L824.0 1142.00 L825.0 1142.00 L826.0 1142.00 L827.0 1142.00 L828.0 1142.00 L829.0 1142.00 L830.0 1142.00 L831.0 1142.00 L832.0 1142.00 L833.0 1142.00 L834.0 1142.00 L835.0 1142.00 L836.0 1142.00 L837.0 1142.00 L838.0 1142.00 L839.0 1142.00 L840.0 1142.00 L841.0 1142.00 L842.0 1142.00 L843.0 1142.00 L844.0 1142.00 L845.0 1142.00 L846.0 1142.00 L847.0 1142.00 L848.0 1142.00 L849.0 1142.00 L850.0 1142.00 L851.0 1142.00 L852.0 1142.00 L853.0 1142.00 L854.0 1142.00 L855.0 1142.00 L856.0 1142.00 L857.0 1142.00 L858.0 1142.00 L859.0 1142.00 L860.0 1142.00 L861.0 1142.00 L862.0 1142.00 L863.0 1142.00 L864.0 1142.00 L865.0 1142.00 L866.0 1142.00 L867.0 1142.00 L868.0 1142.00 L869.0 1142.00 L870.0 1142.00 L871.0 1142.00 L872.0 1142.00 L873.0 1142.00 L874.0 1142.00 L875.0 1142.00 L876.0 1142.00 L877.0 1142.00 L878.0 1142.00 L879.0 1142.00 L880.0 1142.00 L881.0 1142.00 L882.0 1142.00 L883.0 1142.00 L884.0 1142.00 L885.0 1142.00 L886.0 1142.00 L887.0 1142.00 L888.0 1142.00 L889.0 1142.00 L890.0 1142.00 L891.0 1142.00 L892.0 1142.00 L893.0 1142.00 L894.0 1142.00 L895.0 1142.00 L896.0 1142.00 L897.0 1142.00 L898.0 1142.00 L899.0 1142.00 L900.0 1142.00 L901.0 1142.00 L902.0 1142.00 L903.0 1142.00 L904.0 1142.00 L905.0 1142.00 L906.0 1142.00 L907.0 1142.00 L908.0 1142.00 L909.0 1142.00 L910.0 1142.00 L911.0 1142.00 L912.0 1142.00 L913.0 1142.00 L914.0 1142.00 L915.0 1142.00 L916.0 1142.00 L917.0 1142.00 L918.0 1142.00 L919.0 1142.00 L920.0 1142.00 L921.0 1142.00 L922.0 1142.00 L923.0 1142.00 L924.0 1142.00 L925.0 1142.00 L926.0 1142.00 L927.0 1142.00 L928.0 1142.00 L929.0 1142.00 L930.0 1142.00 L931.0 1142.00 L932.0 1142.00 L933.0 1142.00 L934.0 1142.00 L935.0 1142.00 L936.0 1142.00 L937.0 1142.00 L938.0 1142.00 L939.0 1142.00 L940.0 1142.00 L941.0 1142.00 L942.0 1142.00 L943.0 1142.00 L944.0 1142.00 L945.0 1142.00 L946.0 1142.00 L947.0 1142.00 L948.0 1142.00 L949.0 1142.00 L950.0 1142.00 L951.0 1142.00 L952.0 1142.00 L953.0 1142.00 L954.0 1142.00 L955.0 1142.00 L956.0 1142.00 L957.0 1142.00 L958.0 1142.00 L959.0 1142.00 L960.0 1142.00 L961.0 1142.00 L962.0 1142.00 L963.0 1142.00 L964.0 1142.00 L965.0 1142.00 L966.0 1142.00 L967.0 1142.00 L968.0 1142.00 L969.0 1142.00 L970.0 1142.00 L971.0 1142.00 L972.0 1142.00 L973.0 1142.00 L974.0 1142.00 L975.0 1142.00 L976.0 1142.00 L977.0 1142.00 L978.0 1142.00 L979.0 1142.00 L980.0 1142.00 L981.0 1142.00 L982.0 1142.00 L983.0 1142.00 L984.0 1142.00 L985.0 1142.00 L986.0 1142.00 L987.0 1142.00 L988.0 1142.00 L989.0 1142.00 L990.0 1142.00 L991.0 1142.00 L992.0 1142.00 L993.0 1142.00 L994.0 1142.00 L995.0 1142.00 L996.0 1142.00 L997.0 1142.00 L998.0 1142.00 L999.0 1142.00 L1000.0 1142.00 L1001.0 1142.00 L1002.0 1142.00 L1003.0 1142.00 L1004.0 1142.00 L1005.0 1142.00 L1006.0 1142.00 L1007.0 1142.00 L1008.0 1142.00 L1009.0 1142.00 L1010.0 1142.00 L1011.0 1142.00 L1012.0 1142.00 L1013.0 1142.00 L1014.0 1142.00 L1015.0 1142.00 L1016.0 1142.00 L1017.0 1142.00 L1018.0 1142.00 L1019.0 1142.00 L1020.0 1142.00 L1021.0 1142.00 L1022.0 1142.00 L1023.0 1142.00 L1024.0 1142.00 L1025.0 1142.00 L1026.0 1142.00 L1027.0 1142.00 L1028.0 1142.00 L1029.0 1142.00 L1030.0 1142.00 L1031.0 1142.00 L1032.0 1142.00 L1033.0 1142.00 L1034.0 1142.00 L1035.0 1142.00 L1036.0 1142.00 L1037.0 1142.00 L1038.0 1142.00 L1039.0 1142.00 L1040.0 1142.00 L1041.0 1142.00 L1042.0 1142.00 L1043.0 1142.00 L1044.0 1142.00 L1045.0 1142.00 L1046.0 1142.00 L1047.0 1142.00 L1048.0 1142.00 L1049.0 1142.00 L1050.0 1142.00 L1051.0 1142.00 L1052.0 1142.00 L1053.0 1142.00 L1054.0 1142.00 L1055.0 1142.00 L1056.0 1142.00 L1057.0 1142.00 L1058.0 1142.00 L1059.0 1142.00 L1060.0 1142.00 L1061.0 1142.00 L1062.0 1142.00 L1063.0 1142.00 L1064.0 1142.00 L1065.0 1142.00 L1066.0 1142.00 L1067.0 1142.00 L1068.0 1142.00 L1069.0 1142.00 L1070.0 1142.00 L1071.0 1142.00 L1072.0 1142.00 L1073.0 1142.00 L1074.0 1142.00 L1075.0 1142.00 L1076.0 1142.00 L1077.0 1142.00 L1078.0 1142.00 L1079.0 1142.00 L1080.0 1142.00 L1081.0 1142.00 L1082.0 1142.00 L1083.0 1142.00 L1084.0 1142.00 L1085.0 1142.00 L1086.0 1142.00 L1087.0 1142.00 L1088.0 1142.00 L1089.0 1142.00 L1090.0 1142.00 L1091.0 1142.00 L1092.0 1142.00 L1093.0 1142.00 L1094.0 1142.00 L1095.0 1142.00 L1096.0 1142.00 L1097.0 1142.00 L1098.0 1142.00 L1099.0 1142.00 L1100.0 1142.00 L1101.0 1142.00 L1102.0 1142.00 L1103.0 1142.00 L1104.0 1142.00 L1105.0 1142.00 L1106.0 1142.00 L1107.0 1142.00 L1108.0 1142.00 L1109.0 1142.00 L1110.0 1142.00 L1111.0 1142.00 L1112.0 1142.00 L1113.0 1142.00 L1114.0 1142.00 L1115.0 1142.00 L1116.0 1142.00 L1117.0 1142.00 L1118.0 1142.00 L1119.0 1142.00 L1120.0 1142.00 L1121.0 1142.00 L1122.0 1142.00 L1123.0 1142.00 L1124.0 1142.00 L1125.0 1142.00 L1126.0 1142.00 L1127.0 1142.00 L1128.0 1142.00 L1129.0 1142.00 L1130.0 1142.00 L1131.0 1142.00 L1132.0 1142.00 L1133.0 1142.00 L1134.0 1142.00 L1135.0 1142.00 L1136.0 1142.00 L1137.0 1142.00 L1138.0 1142.00 L1139.0 1142.00 L1140.0 1142.00 L1141.0 1142.00 L1142.0 1142.00 L1143.0 1142.00 L1144.0 1142.00 L1145.0 1142.00 L1146.0 1142.00 L1147.0 1142.00 L1148.0 1142.00 L1149.0 1142.00 L1150.0 1142.00 L1151.0 1142.00 L1152.0 1142.00 L1153.0 1142.00 L1154.0 1142.00 L1155.0 1142.00 L1156.0 1142.00 L1157.0 1142.00 L1158.0 1142.00 L1159.0 1142.00 L1160.0 1142.00 L1161.0 1142.00 L1162.0 1142.00 L1163.0 1142.00 L1164.0 1142.00 L1165.0 1142.00 L1166.0 1142.00 L1167.0 1142.00 L1168.0 1142.00 L1169.0 1142.00 L1170.0 1142.00 L1171.0 1142.00 L1172.0 1142.00 L1173.0 1142.00 L1174.0 1142.00 L1175.0 1142.00 L1176.0 1142.00 L1177.0 1142.00 L1178.0 1142.00 L1179.0 1142.00 L1180.0 1142.00 L1181.0 1142.00 L1182.0 1142.00 L1183.0 1142.00 L1184.0 1142.00 L1185.0 1142.00 L1186.0 1142.00 L1187.0 1142.00 L1188.0 1142.00 L1189.0 1142.00 L1190.0 1142.00 L1191.0 1142.00 L1192.0 1142.00 L1193.0 1142.00 L1194.0 1142.00 L1195.0 1142.00 L1196.0 1142.00 L1197.0 1142.00 L1198.0 1142.00 L1199.0 1142.00 L1200.0 1142.00 L1201.0 1142.00 L1202.0 1142.00 L1203.0 1141.89 L1204.0 1141.56 L1205.0 1141.07 L1206.0 1140.50 L1207.0 1139.93 L1208.0 1139.44 L1209.0 1139.11 L1210.0 1139.00 L1211.0 1139.11 L1212.0 1139.44 L1213.0 1139.93 L1214.0 1140.50 L1215.0 1141.07 L1216.0 1141.56 L1217.0 1141.89 L1218.0 1142.00 L1219.0 1142.00 L1220.0 1142.00 L1221.0 1142.00 L1222.0 1142.00 L1223.0 1142.00 L1224.0 1142.00 L1225.0 1142.00 L1226.0 1142.00 L1227.0 1142.00 L1228.0 1142.00 L1229.0 1142.00 L1230.0 1142.00 L1231.0 1142.00 L1232.0 1142.00 L1233.0 1142.00 L1234.0 1142.00 L1235.0 1142.00 L1236.0 1142.00 L1237.0 1142.00 L1238.0 1142.00 L1239.0 1142.00 L1240.0 1142.00 L1241.0 1142.00 L1242.0 1142.00 L1243.0 1142.00 L1244.0 1142.00 L1245.0 1142.00 L1246.0 1142.00 L1247.0 1142.00 L1248.0 1142.00 L1249.0 1142.00 L1250.0 1142.00 L1251.0 1142.00 L1252.0 1142.00 L1253.0 1142.00 L1254.0 1142.00 L1255.0 1142.00 L1256.0 1142.00 L1257.0 1142.00 L1258.0 1142.00 L1259.0 1142.00 L1260.0 1142.00 L1261.0 1142.00 L1262.0 1142.00 L1263.0 1142.00 L1264.0 1142.00 L1265.0 1142.00 L1266.0 1142.00 L1267.0 1142.00 L1268.0 1142.00 L1269.0 1142.00 L1270.0 1142.00 L1271.0 1142.00 L1272.0 1142.00 L1273.0 1142.00 L1274.0 1142.00 L1275.0 1142.00 L1276.0 1142.00 L1277.0 1142.00 L1278.0 1142.00 L1279.0 1142.00 L1280.0 1142.00 L1281.0 1142.00 L1282.0 1142.00 L1283.0 1142.00 L1284.0 1142.00 L1285.0 1142.00 L1286.0 1142.00 L1287.0 1142.00 L1288.0 1142.00 L1289.0 1142.00 L1290.0 1142.00 L1291.0 1142.00 L1292.0 1142.00 L1293.0 1142.00 L1294.0 1142.00 L1295.0 1142.00 L1296.0 1142.00 L1297.0 1142.00 L1298.0 1142.00 L1299.0 1142.00 L1300.0 1142.00 L1301.0 1142.00 L1302.0 1142.00 L1303.0 1142.00 L1304.0 1142.00 L1305.0 1142.00 L1306.0 1142.00 L1307.0 1142.00 L1308.0 1142.00 L1309.0 1142.00 L1310.0 1142.00 L1311.0 1142.00 L1312.0 1142.00 L1313.0 1142.00 L1314.0 1142.00 L1315.0 1142.00 L1316.0 1142.00 L1317.0 1142.00 L1318.0 1142.00 L1319.0 1142.00 L1320.0 1142.00 L1321.0 1142.00 L1322.0 1142.00 L1323.0 1142.00 L1324.0 1142.00 L1325.0 1142.00 L1326.0 1142.00 L1327.0 1142.00 L1328.0 1142.00 L1329.0 1142.00 L1330.0 1142.00 L1331.0 1142.00 L1332.0 1142.00 L1333.0 1142.00 L1334.0 1142.00 L1335.0 1142.00 L1336.0 1142.00 L1337.0 1142.00 L1338.0 1142.00 L1339.0 1142.00 L1340.0 1142.00 L1341.0 1142.00 L1342.0 1142.00 L1343.0 1142.00 L1344.0 1142.00 L1345.0 1142.00 L1346.0 1142.00 L1347.0 1142.00 L1348.0 1142.00 L1349.0 1142.00 L1350.0 1142.00 L1351.0 1142.00 L1352.0 1142.00 L1353.0 1142.00 L1354.0 1142.00 L1355.0 1142.00 L1356.0 1142.00 L1357.0 1142.00 L1358.0 1142.00 L1359.0 1142.00 L1360.0 1142.00 L1361.0 1142.00 L1362.0 1142.00 L1363.0 1142.00 L1364.0 1142.00 L1365.0 1142.00 L1366.0 1142.00 L1367.0 1142.00 L1368.0 1142.00 L1369.0 1142.00 L1370.0 1142.00 L1371.0 1142.00 L1372.0 1142.00 L1373.0 1142.00 L1374.0 1142.00 L1375.0 1142.00 L1376.0 1142.00 L1377.0 1142.00 L1378.0 1142.00 L1379.0 1142.00 L1380.0 1142.00 L1381.0 1142.00 L1382.0 1142.00 L1383.0 1142.00 L1384.0 1142.00 L1385.0 1142.00 L1386.0 1142.00 L1387.0 1142.00 L1388.0 1142.00 L1389.0 1142.00 L1390.0 1142.00 L1391.0 1142.00 L1392.0 1142.00 L1393.0 1142.00 L1394.0 1142.00 L1395.0 1142.00 L1396.0 1142.00 L1397.0 1142.00 L1398.0 1142.00 L1399.0 1142.00 L1400.0 1142.00 L1401.0 1142.00 L1402.0 1142.00 L1403.0 1142.00 L1404.0 1142.00 L1405.0 1142.00 L1406.0 1142.00 L1407.0 1142.00 L1408.0 1142.00 L1409.0 1142.00 L1410.0 1142.00 L1411.0 1142.00 L1412.0 1142.00 L1413.0 1142.00 L1414.0 1142.00 L1415.0 1142.00 L1416.0 1142.00 L1417.0 1142.00 L1418.0 1142.00 L1419.0 1142.00 L1420.0 1142.00 L1421.0 1142.00 L1422.0 1142.00 L1423.0 1142.00 L1424.0 1142.00 L1425.0 1142.00 L1426.0 1142.00 L1427.0 1142.00 L1428.0 1142.00 L1429.0 1142.00 L1430.0 1142.00 L1431.0 1142.00 L1432.0 1142.00 L1433.0 1142.00 L1434.0 1142.00 L1435.0 1142.00 L1436.0 1142.00 L1437.0 1142.00 L1438.0 1142.00 L1439.0 1142.00 L1440.0 1142.00 L1441.0 1142.00 L1442.0 1142.00 L1443.0 1142.00 L1444.0 1142.00 L1445.0 1142.00 L1446.0 1142.00 L1447.0 1142.00 L1448.0 1142.00 L1449.0 1142.00 L1450.0 1142.00 L1451.0 1142.00 L1452.0 1142.00 L1453.0 1142.00 L1454.0 1142.00 L1455.0 1142.00 L1456.0 1142.00 L1457.0 1142.00 L1458.0 1142.00 L1459.0 1142.00 L1460.0 1142.00 L1461.0 1142.00 L1462.0 1142.00 L1463.0 1142.00 L1464.0 1142.00 L1465.0 1142.00 L1466.0 1142.00 L1467.0 1142.00 L1468.0 1142.00 L1469.0 1142.00 L1470.0 1142.00 L1471.0 1142.00 L1472.0 1142.00 L1473.0 1142.00 L1474.0 1142.00 L1475.0 1142.00 L1476.0 1142.00 L1477.0 1142.00 L1478.0 1142.00 L1479.0 1142.00 L1480.0 1142.00 L1481.0 1142.00 L1482.0 1142.00 L1483.0 1142.00 L1484.0 1142.00 L1485.0 1142.00 L1486.0 1142.00 L1487.0 1142.00 L1488.0 1142.00 L1489.0 1142.00 L1490.0 1142.00 L1491.0 1142.00 L1492.0 1142.00 L1493.0 1142.00 L1494.0 1142.00 L1495.0 1142.00 L1496.0 1142.00 L1497.0 1142.00 L1498.0 1142.00 L1499.0 1142.00 L1500.0 1142.00 L1501.0 1142.00 L1502.0 1142.00 L1503.0 1142.00 L1504.0 1142.00 L1505.0 1142.00 L1506.0 1142.00 L1507.0 1142.00 L1508.0 1142.00 L1509.0 1142.00 L1510.0 1142.00 L1511.0 1142.00 L1512.0 1142.00 L1513.0 1142.00 L1514.0 1142.00 L1515.0 1142.00 L1516.0 1142.00 L1517.0 1142.00 L1518.0 1142.00 L1519.0 1142.00 L1520.0 1142.00 L1521.0 1142.00 L1522.0 1142.00 L1523.0 1142.00 L1524.0 1142.00 L1525.0 1142.00 L1526.0 1142.00 L1527.0 1142.00 L1528.0 1142.00 L1529.0 1142.00 L1530.0 1142.00 L1531.0 1142.00 L1532.0 1142.00 L1533.0 1142.00 L1534.0 1142.00 L1535.0 1142.00 L1536.0 1142.00 L1537.0 1142.00 L1538.0 1142.00 L1539.0 1142.00 L1540.0 1142.00 L1541.0 1142.00 L1542.0 1142.00 L1543.0 1142.00 L1544.0 1142.00 L1545.0 1142.00 L1546.0 1142.00 L1547.0 1142.00 L1548.0 1142.00 L1549.0 1142.00 L1550.0 1142.00 L1551.0 1142.00 L1552.0 1142.00 L1553.0 1142.00 L1554.0 1142.00 L1555.0 1142.00 L1556.0 1142.00 L1557.0 1142.00 L1558.0 1142.00 L1559.0 1142.00 L1560.0 1142.00 L1561.0 1142.00 L1562.0 1142.00 L1563.0 1142.00 L1564.0 1142.00 L1565.0 1142.00 L1566.0 1142.00 L1567.0 1142.00 L1568.0 1142.00 L1569.0 1142.00 L1570.0 1142.00 L1571.0 1142.00 L1572.0 1142.00 L1573.0 1142.00 L1574.0 1142.00 L1575.0 1142.00 L1576.0 1142.00 L1577.0 1142.00 L1578.0 1142.00 L1579.0 1142.00 L1580.0 1142.00 L1581.0 1142.00 L1582.0 1142.00 L1583.0 1142.00 L1584.0 1142.00 L1585.0 1142.00 L1586.0 1142.00 L1587.0 1142.00 L1588.0 1142.00 L1589.0 1142.00 L1590.0 1142.00 L1591.0 1142.00 L1592.0 1142.00 L1593.0 1142.00 L1594.0 1142.00 L1595.0 1142.00 L1596.0 1142.00 L1597.0 1142.00 L1598.0 1142.00 L1599.0 1142.00 L1600.0 1142.00 L1601.0 1142.00 L1602.0 1142.00 L1603.0 1142.00 L1604.0 1142.00 L1605.0 1142.00 L1606.0 1142.00 L1607.0 1142.00 L1608.0 1142.00 L1609.0 1142.00 L1610.0 1142.00 L1611.0 1142.00 L1612.0 1142.00 L1613.0 1142.00 L1614.0 1142.00 L1615.0 1142.00 L1616.0 1142.00 L1617.0 1142.00 L1618.0 1142.00 L1619.0 1142.00 L1620.0 1142.00 L1621.0 1142.00 L1622.0 1142.00 L1623.0 1142.00 L1624.0 1142.00 L1625.0 1142.00 L1626.0 1142.00 L1627.0 1142.00 L1628.0 1142.00 L1629.0 1142.00 L1630.0 1142.00 L1631.0 1142.00 L1632.0 1142.00 L1633.0 1142.00 L1634.0 1142.00 L1635.0 1142.00 L1636.0 1142.00 L1637.0 1142.00 L1638.0 1142.00 L1639.0 1142.00 L1640.0 1142.00 L1641.0 1142.00 L1642.0 1142.00 L1643.0 1142.00 L1644.0 1142.00 L1645.0 1142.00 L1646.0 1142.00 L1647.0 1142.00 L1648.0 1142.00 L1649.0 1142.00 L1650.0 1142.00 L1651.0 1142.00 L1652.0 1142.00 L1653.0 1142.00 L1654.0 1142.00 L1655.0 1142.00 L1656.0 1142.00 L1657.0 1142.00 L1658.0 1142.00 L1659.0 1142.00 L1660.0 1142.00 L1661.0 1142.00 L1662.0 1142.00 L1663.0 1142.00 L1664.0 1142.00 L1665.0 1142.00 L1666.0 1142.00 L1667.0 1142.00 L1668.0 1142.00 L1669.0 1142.00 L1670.0 1142.00 L1671.0 1142.00 L1672.0 1142.00 L1673.0 1142.00 L1674.0 1142.00 L1675.0 1142.00 L1676.0 1142.00 L1677.0 1142.00 L1678.0 1142.00 L1679.0 1142.00 L1680.0 1142.00 L1681.0 1142.00 L1682.0 1142.00 L1683.0 1142.00 L1684.0 1142.00 L1685.0 1142.00 L1686.0 1142.00 L1687.0 1142.00 L1688.0 1142.00 L1689.0 1142.00 L1690.0 1142.00 L1691.0 1142.00 L1692.0 1142.00 L1693.0 1142.00 L1694.0 1142.00 L1695.0 1142.00 L1696.0 1142.00 L1697.0 1142.00 L1698.0 1142.00 L1699.0 1142.00 L1700.0 1142.00 L1701.0 1142.00 L1702.0 1142.00 L1703.0 1142.00 L1704.0 1142.00 L1705.0 1142.00 L1706.0 1142.00 L1707.0 1142.00 L1708.0 1142.00 L1709.0 1142.00 L1710.0 1142.00 L1711.0 1142.00 L1712.0 1142.00 L1713.0 1142.00 L1714.0 1142.00 L1715.0 1142.00 L1716.0 1142.00 L1717.0 1142.00 L1718.0 1142.00 L1719.0 1142.00 L1720.0 1142.00 L1721.0 1142.00 L1722.0 1142.00 L1723.0 1142.00 L1724.0 1142.00 L1725.0 1142.00 L1726.0 1142.00 L1727.0 1142.00 L1728.0 1142.00 L1729.0 1142.00 L1730.0 1142.00 L1731.0 1142.00 L1732.0 1142.00 L1733.0 1142.00 L1734.0 1142.00 L1735.0 1142.00 L1736.0 1142.00 L1737.0 1142.00 L1738.0 1142.00 L1739.0 1142.00 L1740.0 1142.00 L1741.0 1142.00 L1742.0 1142.00 L1743.0 1142.00 L1744.0 1142.00 L1745.0 1142.00 L1746.0 1142.00 L1747.0 1142.00 L1748.0 1142.00 L1749.0 1142.00 L1750.0 1142.00 L1751.0 1142.00 L1752.0 1142.00 L1753.0 1142.00 L1754.0 1142.00 L1755.0 1142.00 L1756.0 1142.00 L1757.0 1142.00 L1758.0 1142.00 L1759.0 1142.00 L1760.0 1142.00 L1761.0 1142.00 L1762.0 1142.00 L1763.0 1142.00 L1764.0 1142.00 L1765.0 1142.00 L1766.0 1142.00 L1767.0 1142.00 L1768.0 1142.00 L1769.0 1142.00 L1770.0 1142.00 L1771.0 1142.00 L1772.0 1142.00 L1773.0 1142.00 L1774.0 1142.00 L1775.0 1142.00 L1776.0 1142.00 L1777.0 1142.00 L1778.0 1142.00 L1779.0 1142.00 L1780.0 1142.00 L1781.0 1142.00 L1782.0 1142.00 L1783.0 1142.00 L1784.0 1142.00 L1785.0 1142.00 L1786.0 1142.00 L1787.0 1142.00 L1788.0 1142.00 L1789.0 1142.00 L1790.0 1142.00 L1791.0 1142.00 L1792.0 1142.00 L1793.0 1142.00 L1794.0 1142.00 L1795.0 1142.00 L1796.0 1142.00 L1797.0 1142.00 L1798.0 1142.00 L1799.0 1142.00 L1800.0 1142.00 L1801.0 1142.00 L1802.0 1142.00 L1803.0 1142.00 L1804.0 1142.00 L1805.0 1142.00 L1806.0 1142.00 L1807.0 1142.00 L1808.0 1142.00 L1809.0 1142.00 L1810.0 1142.00 L1811.0 1142.00 L1812.0 1142.00 L1813.0 1142.00 L1814.0 1142.00 L1815.0 1142.00 L1816.0 1142.00 L1817.0 1142.00 L1818.0 1142.00 L1819.0 1142.00 L1820.0 1142.00 L1821.0 1142.00 L1822.0 1142.00 L1823.0 1142.00 L1824.0 1142.00 L1825.0 1142.00 L1826.0 1142.00 L1827.0 1142.00 L1828.0 1142.00 L1829.0 1142.00 L1830.0 1142.00 L1831.0 1142.00 L1832.0 1142.00 L1833.0 1142.00 L1834.0 1142.00 L1835.0 1142.00 L1836.0 1142.00 L1837.0 1142.00 L1838.0 1142.00 L1839.0 1142.00 L1840.0 1142.00 L1841.0 1142.00 L1842.0 1142.00 L1843.0 1142.00 L1844.0 1142.00 L1845.0 1142.00 L1846.0 1142.00 L1847.0 1142.00 L1848.0 1142.00 L1849.0 1142.00 L1850.0 1142.00 L1851.0 1142.00 L1852.0 1142.00 L1853.0 1142.00 L1854.0 1142.00 L1855.0 1142.00 L1856.0 1142.00 L1857.0 1142.00 L1858.0 1142.00 L1859.0 1142.00 L1860.0 1142.00 L1861.0 1142.00 L1862.0 1142.00 L1863.0 1142.00 L1864.0 1142.00 L1865.0 1142.00 L1866.0 1142.00 L1867.0 1142.00 L1868.0 1142.00 L1869.0 1142.00 L1870.0 1142.00 L1871.0 1142.00 L1872.0 1142.00 L1873.0 1142.00 L1874.0 1142.00 L1875.0 1142.00 L1876.0 1142.00 L1877.0 1142.00 L1878.0 1142.00 L1879.0 1142.00 L1880.0 1142.00 L1881.0 1142.00 L1882.0 1142.00 L1883.0 1142.00 L1884.0 1142.00 L1885.0 1142.00 L1886.0 1142.00 L1887.0 1142.00 L1888.0 1142.00 L1889.0 1142.00 L1890.0 1142.00 L1891.0 1142.00 L1892.0 1142.00 L1893.0 1142.00 L1894.0 1142.00 L1895.0 1142.00 L1896.0 1142.00 L1897.0 1142.00 L1898.0 1142.00 L1899.0 1142.00 L1900.0 1142.00 L1901.0 1142.00 L1902.0 1142.00 L1903.0 1142.00 L1904.0 1142.00 L1905.0 1142.00 L1906.0 1142.00 L1907.0 1142.00 L1908.0 1142.00 L1909.0 1142.00 L1910.0 1142.00 L1911.0 1142.00 L1912.0 1142.00 L1913.0 1142.00 L1914.0 1142.00 L1915.0 1142.00 L1916.0 1142.00 L1917.0 1142.00 L1918.0 1142.00 L1919.0 1142.00 L1920.0 1142.00 L1921.0 1142.00 L1922.0 1142.00 L1923.0 1142.00 L1924.0 1142.00 L1925.0 1142.00 L1926.0 1142.00 L1927.0 1142.00 L1928.0 1142.00 L1929.0 1142.00 L1930.0 1142.00 L1931.0 1142.00 L1932.0 1142.00 L1933.0 1142.00 L1934.0 1142.00 L1935.0 1142.00 L1936.0 1142.00 L1937.0 1142.00 L1938.0 1142.00 L1939.0 1142.00 L1940.0 1142.00 L1941.0 1142.00 L1942.0 1142.00 L1943.0 1142.00 L1944.0 1142.00 L1945.0 1142.00 L1946.0 1142.00 L1947.0 1142.00 L1948.0 1142.00 L1949.0 1142.00 L1950.0 1142.00 L1951.0 1142.00 L1952.0 1142.00 L1953.0 1142.00 L1954.0 1142.00 L1955.0 1142.00 L1956.0 1142.00 L1957.0 1142.00 L1958.0 1142.00 L1959.0 1142.00 L1960.0 1142.00 L1961.0 1142.00 L1962.0 1142.00 L1963.0 1142.00 L1964.0 1142.00 L1965.0 1142.00 L1966.0 1142.00 L1967.0 1142.00 L1968.0 1142.00 L1969.0 1142.00 L1970.0 1142.00 L1971.0 1142.00 L1972.0 1142.00 L1973.0 1142.00 L1974.0 1142.00 L1975.0 1142.00 L1976.0 1142.00 L1977.0 1142.00 L1978.0 1142.00 L1979.0 1142.00 L1980.0 1142.00 L1981.0 1142.00 L1982.0 1142.00 L1983.0 1142.00 L1984.0 1142.00 L1985.0 1142.00 L1986.0 1142.00 L1987.0 1142.00 L1988.0 1142.00 L1989.0 1142.00 L1990.0 1142.00 L1991.0 1142.00 L1992.0 1142.00 L1993.0 1142.00 L1994.0 1142.00 L1995.0 1142.00 L1996.0 1142.00 L1997.0 1142.00 L1998.0 1142.00 L1999.0 1142.00 L2000.0 1142.00 L2001 1142 Z" fill="rgba(183,119,240,0.35)" stroke="#a86ee0" stroke-width="1.2"/><rect x="433" y="1140.6" width="1567" height="1.7" fill="#c592e8"/></g></svg><div style="position:absolute;left:433px;top:935px;width:1567px;height:40px;overflow:hidden"><div class="t" style="left:-6px;top:6.90px;font-size:22px;line-height:22px;color:#777;font-weight:400;letter-spacing:0.9px;">20:08:50</div>
<div class="t" style="left:203px;top:6.90px;font-size:22px;line-height:22px;color:#777;font-weight:400;letter-spacing:0.9px;">20:09:00</div>
<div class="t" style="left:412px;top:6.90px;font-size:22px;line-height:22px;color:#777;font-weight:400;letter-spacing:0.9px;">20:09:10</div>
<div class="t" style="left:621px;top:6.90px;font-size:22px;line-height:22px;color:#777;font-weight:400;letter-spacing:0.9px;">20:09:20</div>
<div class="t" style="left:830px;top:6.90px;font-size:22px;line-height:22px;color:#777;font-weight:400;letter-spacing:0.9px;">20:09:30</div>
<div class="t" style="left:1039px;top:6.90px;font-size:22px;line-height:22px;color:#777;font-weight:400;letter-spacing:0.9px;">20:09:40</div>
<div class="t" style="left:1248px;top:6.90px;font-size:22px;line-height:22px;color:#777;font-weight:400;letter-spacing:0.9px;">20:09:50</div>
<div class="t" style="left:1457px;top:6.90px;font-size:22px;line-height:22px;color:#777;font-weight:400;letter-spacing:0.9px;">20:10:00</div>
</div><div class="t" style="left:451px;top:970.98px;font-size:22.5px;line-height:22.5px;color:#777;font-weight:400;letter-spacing:-0.85px;">CPU usage</div>
<div class="t" style="left:449px;top:1159.38px;font-size:22.5px;line-height:22.5px;color:#777;font-weight:400;letter-spacing:-0.5px;">JS heap size</div>
<div class="t" style="left:451px;top:1347.28px;font-size:22.5px;line-height:22.5px;color:#777;font-weight:400;letter-spacing:-0.45px;">DOM Nodes</div>
<div class="t" style="left:451px;top:1001.48px;font-size:22.5px;line-height:22.5px;color:#777;font-weight:400;letter-spacing:-0.2px;background:#fff;padding:0 10px;margin-left:-10px;">100<span class="pc">%</span></div>
<div class="t" style="left:451px;top:1066.47px;font-size:22.5px;line-height:22.5px;color:#777;font-weight:400;letter-spacing:-0.2px;background:#fff;padding:0 10px;margin-left:-10px;">50<span class="pc">%</span></div>
<div class="t" style="left:451px;top:1189.47px;font-size:22.5px;line-height:22.5px;color:#777;font-weight:400;letter-spacing:0.1px;background:#fff;padding:0 10px;margin-left:-10px;">60.0 MB</div>
<div class="t" style="left:451px;top:1253.97px;font-size:22.5px;line-height:22.5px;color:#777;font-weight:400;letter-spacing:0.1px;background:#fff;padding:0 10px;margin-left:-10px;">30.0 MB</div>
<div class="t" style="left:451px;top:1377.97px;font-size:22.5px;line-height:22.5px;color:#777;font-weight:400;letter-spacing:0.7px;background:#fff;padding:0 10px;margin-left:-10px;">4,000</div>
<div class="t" style="left:451px;top:1442.77px;font-size:22.5px;line-height:22.5px;color:#777;font-weight:400;letter-spacing:0.7px;background:#fff;padding:0 10px;margin-left:-10px;">2,000</div>

</body></html>
